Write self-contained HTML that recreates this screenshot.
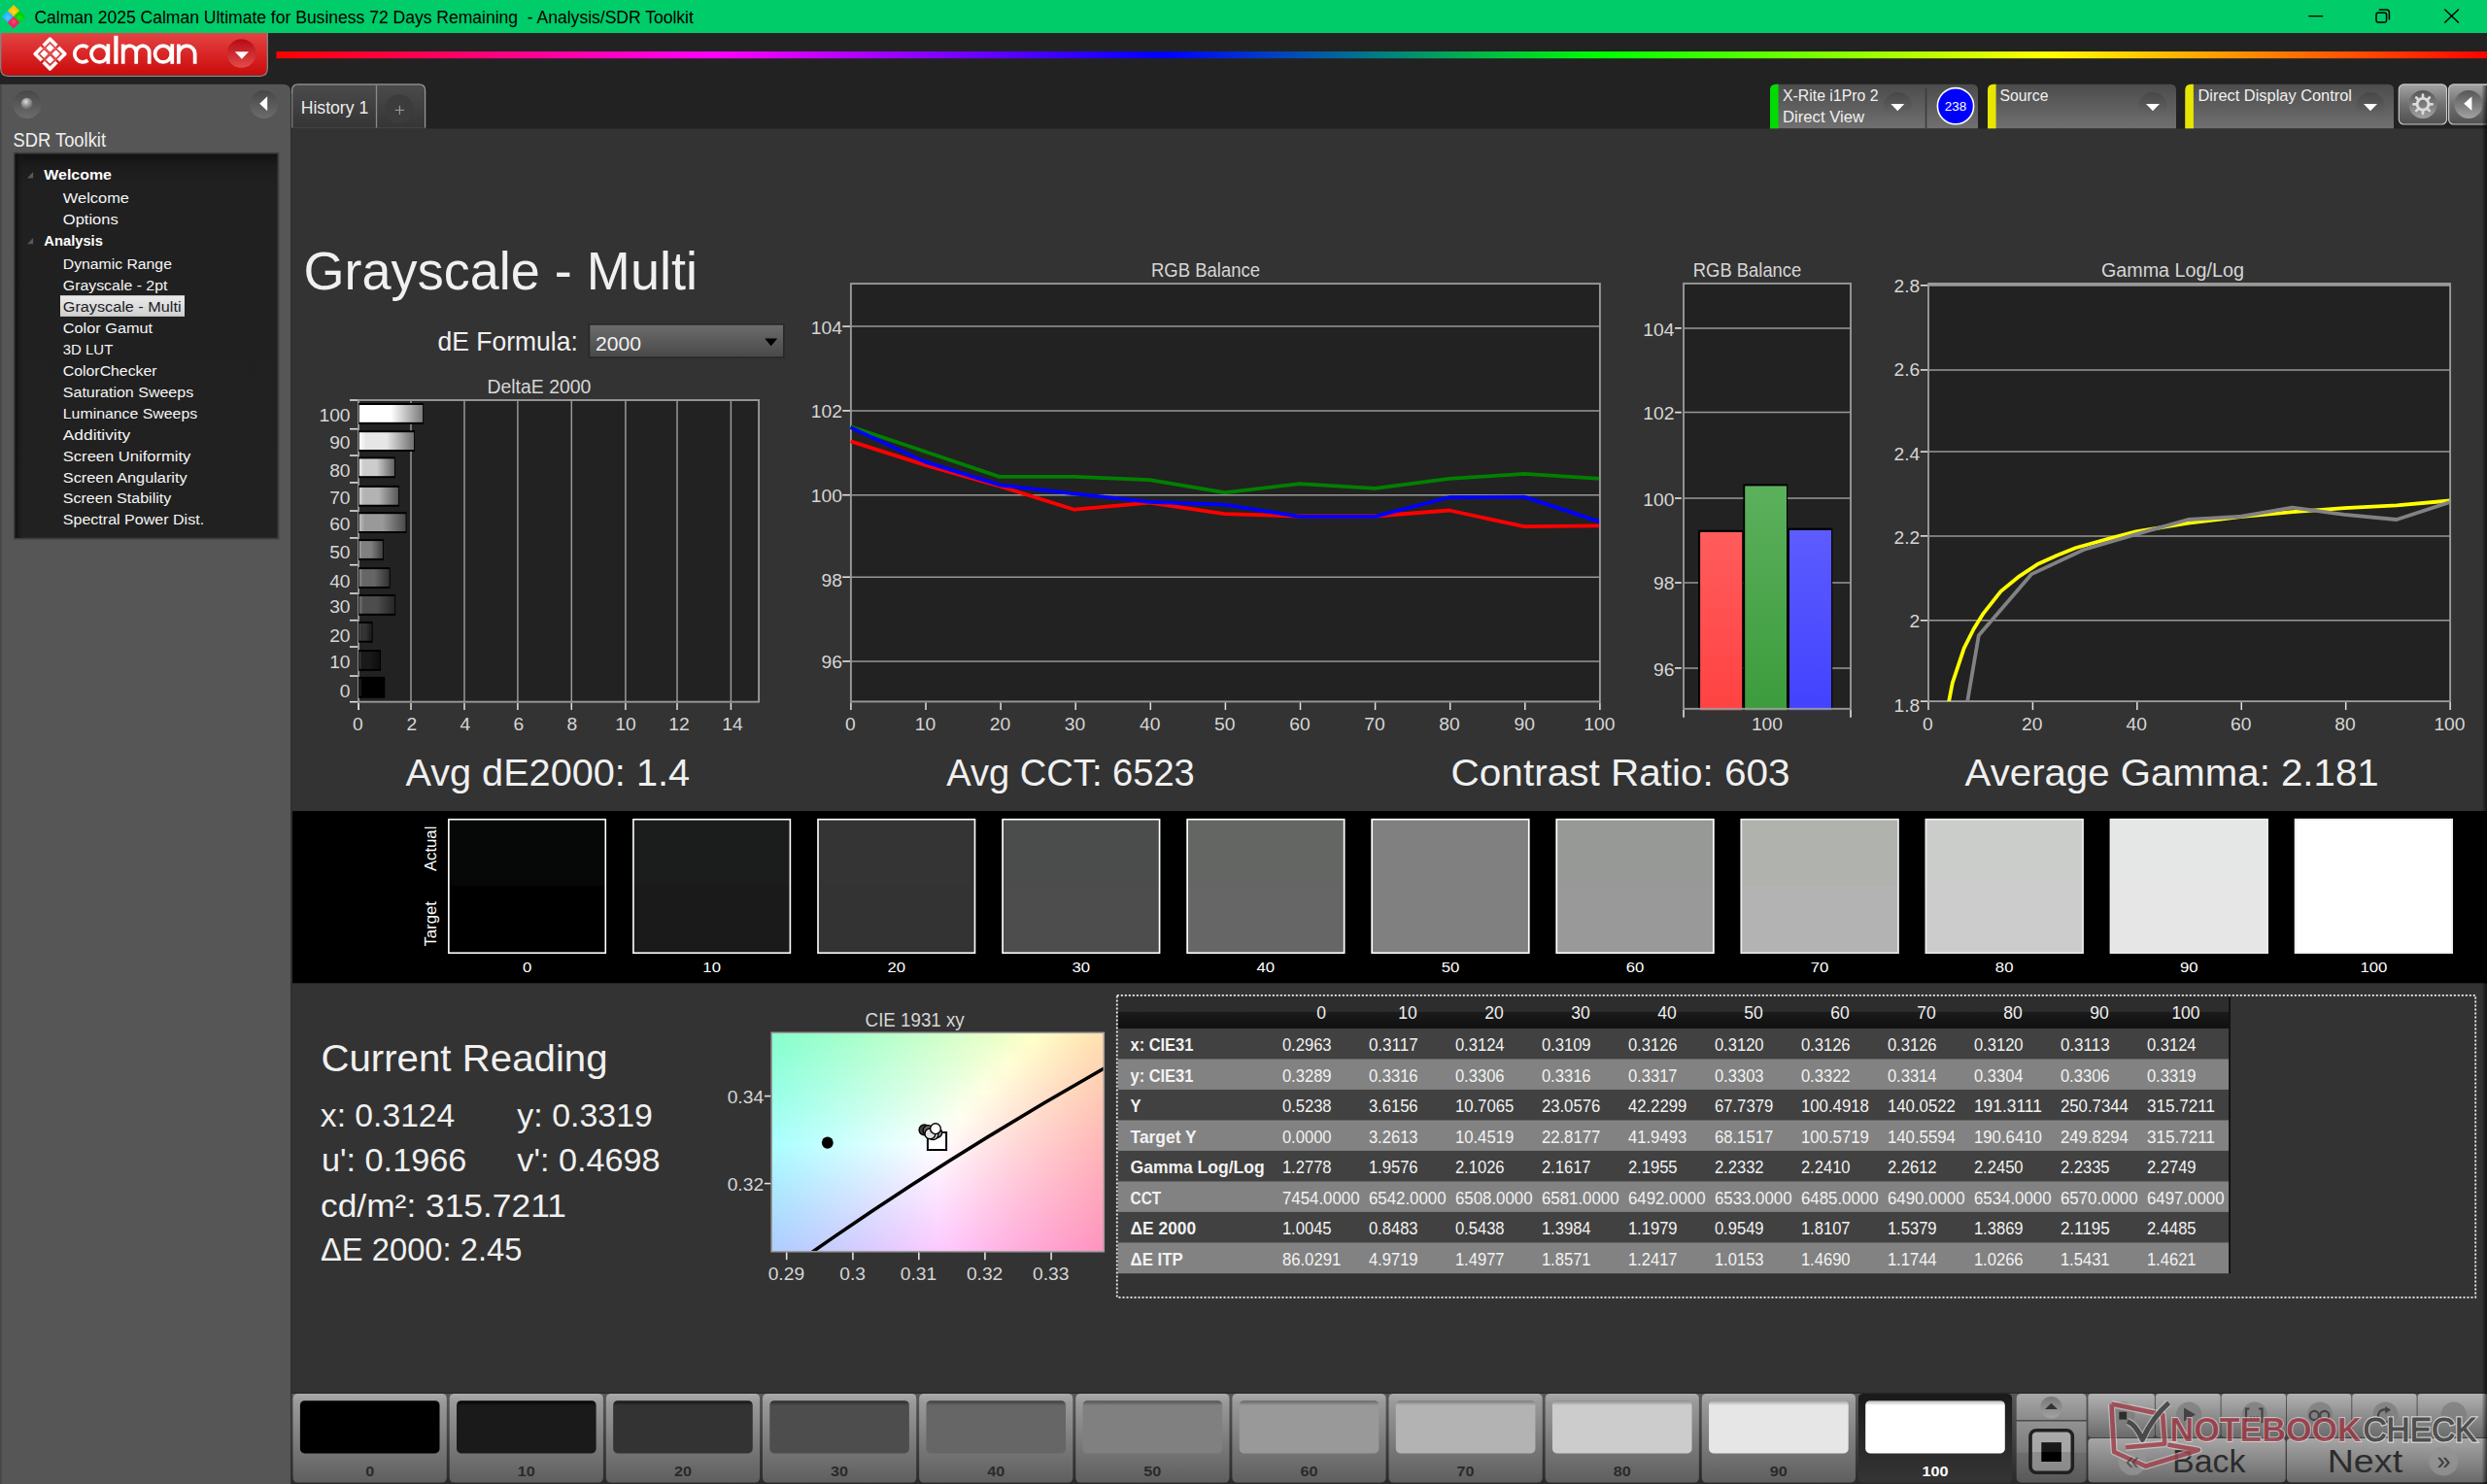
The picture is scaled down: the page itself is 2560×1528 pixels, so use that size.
<!DOCTYPE html>
<html><head><meta charset="utf-8"><title>Calman</title>
<style>
html,body{margin:0;padding:0;background:#333333;width:2560px;height:1528px;overflow:hidden}
svg{display:block;position:absolute;left:0;top:0;font-family:"Liberation Sans",sans-serif}
</style></head><body>
<svg width="2560" height="1528" viewBox="0 0 2560 1528">
<defs>
<linearGradient id="gLogo" x1="0" y1="0" x2="0" y2="1"><stop offset="0" stop-color="#e24444"/><stop offset="0.5" stop-color="#d92626"/><stop offset="1" stop-color="#c90b0b"/></linearGradient>
<linearGradient id="gDD" x1="0" y1="0" x2="0" y2="1"><stop offset="0" stop-color="#b50a14"/><stop offset="1" stop-color="#e24c4c"/></linearGradient>
<linearGradient id="gRain" x1="284" y1="0" x2="2563" y2="0" gradientUnits="userSpaceOnUse"><stop offset="0" stop-color="#ff0000"/><stop offset="0.2" stop-color="#ff00ff"/><stop offset="0.4" stop-color="#0000ff"/><stop offset="0.6" stop-color="#00ff00"/><stop offset="0.8" stop-color="#ffff00"/><stop offset="1" stop-color="#ff0000"/></linearGradient>
<linearGradient id="gSideR" x1="0" y1="0" x2="1" y2="0"><stop offset="0" stop-color="#686868" stop-opacity="0"/><stop offset="1" stop-color="#686868" stop-opacity="0.0"/></linearGradient>
<linearGradient id="gCirc" x1="0" y1="0" x2="0" y2="1"><stop offset="0" stop-color="#474747"/><stop offset="1" stop-color="#6c6c6c"/></linearGradient>
<radialGradient id="gBall2" cx="0.42" cy="0.35" r="0.62" ><stop offset="0" stop-color="#e0e0e0"/><stop offset="0.45" stop-color="#a0a0a0"/><stop offset="1" stop-color="#6a6a6a"/></radialGradient>
<linearGradient id="gTree" x1="0" y1="0" x2="0" y2="1"><stop offset="0" stop-color="#121212"/><stop offset="0.035" stop-color="#1c1c1c"/><stop offset="0.08" stop-color="#202020"/><stop offset="1" stop-color="#212121"/></linearGradient>
<linearGradient id="gTreeL" x1="0" y1="0" x2="1" y2="0"><stop offset="0" stop-color="#0c0c0c" stop-opacity="0.9"/><stop offset="1" stop-color="#202020" stop-opacity="0"/></linearGradient>
<linearGradient id="gSelI" x1="0" y1="0" x2="0" y2="1"><stop offset="0" stop-color="#ececec"/><stop offset="1" stop-color="#cfcfcf"/></linearGradient>
<linearGradient id="gTab" x1="0" y1="0" x2="0" y2="1"><stop offset="0" stop-color="#4b4b4b"/><stop offset="1" stop-color="#353535"/></linearGradient>
<linearGradient id="gTool" x1="0" y1="0" x2="0" y2="1"><stop offset="0" stop-color="#4c4c4c"/><stop offset="1" stop-color="#707070"/></linearGradient>
<linearGradient id="gBtn" x1="0" y1="0" x2="0" y2="1"><stop offset="0" stop-color="#a4a4a4"/><stop offset="0.5" stop-color="#707070"/><stop offset="1" stop-color="#505050"/></linearGradient>
<linearGradient id="gCirc2" x1="0" y1="0" x2="0" y2="1"><stop offset="0" stop-color="#565656"/><stop offset="1" stop-color="#a2a2a2"/></linearGradient>
<linearGradient id="gSel" x1="0" y1="0" x2="0" y2="1"><stop offset="0" stop-color="#6c6c6c"/><stop offset="1" stop-color="#484848"/></linearGradient>
<linearGradient id="gb0" x1="0" y1="0" x2="1" y2="0"><stop offset="0" stop-color="#262626"/><stop offset="0.12" stop-color="#000000"/><stop offset="0.5" stop-color="#000000"/><stop offset="1" stop-color="#000000"/></linearGradient>
<linearGradient id="gb1" x1="0" y1="0" x2="1" y2="0"><stop offset="0" stop-color="#404040"/><stop offset="0.12" stop-color="#1a1a1a"/><stop offset="0.5" stop-color="#1a1a1a"/><stop offset="1" stop-color="#0c0c0c"/></linearGradient>
<linearGradient id="gb2" x1="0" y1="0" x2="1" y2="0"><stop offset="0" stop-color="#595959"/><stop offset="0.12" stop-color="#333333"/><stop offset="0.5" stop-color="#333333"/><stop offset="1" stop-color="#181818"/></linearGradient>
<linearGradient id="gb3" x1="0" y1="0" x2="1" y2="0"><stop offset="0" stop-color="#737373"/><stop offset="0.12" stop-color="#4d4d4d"/><stop offset="0.5" stop-color="#4d4d4d"/><stop offset="1" stop-color="#252525"/></linearGradient>
<linearGradient id="gb4" x1="0" y1="0" x2="1" y2="0"><stop offset="0" stop-color="#8c8c8c"/><stop offset="0.12" stop-color="#666666"/><stop offset="0.5" stop-color="#666666"/><stop offset="1" stop-color="#313131"/></linearGradient>
<linearGradient id="gb5" x1="0" y1="0" x2="1" y2="0"><stop offset="0" stop-color="#a6a6a6"/><stop offset="0.12" stop-color="#808080"/><stop offset="0.5" stop-color="#808080"/><stop offset="1" stop-color="#3d3d3d"/></linearGradient>
<linearGradient id="gb6" x1="0" y1="0" x2="1" y2="0"><stop offset="0" stop-color="#bfbfbf"/><stop offset="0.12" stop-color="#999999"/><stop offset="0.5" stop-color="#999999"/><stop offset="1" stop-color="#494949"/></linearGradient>
<linearGradient id="gb7" x1="0" y1="0" x2="1" y2="0"><stop offset="0" stop-color="#d9d9d9"/><stop offset="0.12" stop-color="#b3b3b3"/><stop offset="0.5" stop-color="#b3b3b3"/><stop offset="1" stop-color="#565656"/></linearGradient>
<linearGradient id="gb8" x1="0" y1="0" x2="1" y2="0"><stop offset="0" stop-color="#f2f2f2"/><stop offset="0.12" stop-color="#cccccc"/><stop offset="0.5" stop-color="#cccccc"/><stop offset="1" stop-color="#626262"/></linearGradient>
<linearGradient id="gb9" x1="0" y1="0" x2="1" y2="0"><stop offset="0" stop-color="#ffffff"/><stop offset="0.12" stop-color="#e6e6e6"/><stop offset="0.5" stop-color="#e6e6e6"/><stop offset="1" stop-color="#6e6e6e"/></linearGradient>
<linearGradient id="gb10" x1="0" y1="0" x2="1" y2="0"><stop offset="0" stop-color="#ffffff"/><stop offset="0.12" stop-color="#ffffff"/><stop offset="0.5" stop-color="#ffffff"/><stop offset="1" stop-color="#7a7a7a"/></linearGradient>
<linearGradient id="gR" x1="0" y1="0" x2="0" y2="1"><stop offset="0" stop-color="#ff5c5c"/><stop offset="1" stop-color="#ff4242"/></linearGradient>
<linearGradient id="gG" x1="0" y1="0" x2="0" y2="1"><stop offset="0" stop-color="#5cb05c"/><stop offset="1" stop-color="#3c9c3c"/></linearGradient>
<linearGradient id="gB" x1="0" y1="0" x2="0" y2="1"><stop offset="0" stop-color="#5c5cff"/><stop offset="1" stop-color="#4242ff"/></linearGradient>
<linearGradient id="ci0" x1="0" y1="0" x2="1" y2="0"><stop offset="0.0000" stop-color="#86ffcd"/><stop offset="0.0714" stop-color="#8fffcd"/><stop offset="0.1429" stop-color="#99ffcd"/><stop offset="0.2143" stop-color="#a4ffcc"/><stop offset="0.2857" stop-color="#aeffcc"/><stop offset="0.3571" stop-color="#b9ffcb"/><stop offset="0.4286" stop-color="#c3ffcb"/><stop offset="0.5000" stop-color="#ceffca"/><stop offset="0.5714" stop-color="#daffca"/><stop offset="0.6429" stop-color="#e5ffc9"/><stop offset="0.7143" stop-color="#f1ffc9"/><stop offset="0.7857" stop-color="#fdffc8"/><stop offset="0.8571" stop-color="#fff5c0"/><stop offset="0.9286" stop-color="#ffeab7"/><stop offset="1.0000" stop-color="#ffe0af"/></linearGradient>
<linearGradient id="ci1" x1="0" y1="0" x2="1" y2="0"><stop offset="0.0000" stop-color="#87ffcf"/><stop offset="0.0714" stop-color="#91ffcf"/><stop offset="0.1429" stop-color="#9bffcf"/><stop offset="0.2143" stop-color="#a5ffce"/><stop offset="0.2857" stop-color="#b0ffce"/><stop offset="0.3571" stop-color="#baffcd"/><stop offset="0.4286" stop-color="#c5ffcd"/><stop offset="0.5000" stop-color="#d0ffcc"/><stop offset="0.5714" stop-color="#dcffcc"/><stop offset="0.6429" stop-color="#e7ffcb"/><stop offset="0.7143" stop-color="#f3ffcb"/><stop offset="0.7857" stop-color="#ffffca"/><stop offset="0.8571" stop-color="#fff3c1"/><stop offset="0.9286" stop-color="#ffe8b8"/><stop offset="1.0000" stop-color="#ffdeaf"/></linearGradient>
<linearGradient id="ci2" x1="0" y1="0" x2="1" y2="0"><stop offset="0.0000" stop-color="#88ffd1"/><stop offset="0.0714" stop-color="#92ffd1"/><stop offset="0.1429" stop-color="#9dffd1"/><stop offset="0.2143" stop-color="#a7ffd0"/><stop offset="0.2857" stop-color="#b1ffd0"/><stop offset="0.3571" stop-color="#bcffcf"/><stop offset="0.4286" stop-color="#c7ffcf"/><stop offset="0.5000" stop-color="#d2ffce"/><stop offset="0.5714" stop-color="#deffce"/><stop offset="0.6429" stop-color="#e9ffce"/><stop offset="0.7143" stop-color="#f5ffcd"/><stop offset="0.7857" stop-color="#fffdcb"/><stop offset="0.8571" stop-color="#fff1c1"/><stop offset="0.9286" stop-color="#ffe6b8"/><stop offset="1.0000" stop-color="#ffdcaf"/></linearGradient>
<linearGradient id="ci3" x1="0" y1="0" x2="1" y2="0"><stop offset="0.0000" stop-color="#8affd3"/><stop offset="0.0714" stop-color="#94ffd3"/><stop offset="0.1429" stop-color="#9effd3"/><stop offset="0.2143" stop-color="#a9ffd2"/><stop offset="0.2857" stop-color="#b3ffd2"/><stop offset="0.3571" stop-color="#beffd1"/><stop offset="0.4286" stop-color="#c9ffd1"/><stop offset="0.5000" stop-color="#d4ffd1"/><stop offset="0.5714" stop-color="#e0ffd0"/><stop offset="0.6429" stop-color="#ecffd0"/><stop offset="0.7143" stop-color="#f7ffcf"/><stop offset="0.7857" stop-color="#fffacb"/><stop offset="0.8571" stop-color="#ffefc1"/><stop offset="0.9286" stop-color="#ffe4b8"/><stop offset="1.0000" stop-color="#ffdab0"/></linearGradient>
<linearGradient id="ci4" x1="0" y1="0" x2="1" y2="0"><stop offset="0.0000" stop-color="#8bffd5"/><stop offset="0.0714" stop-color="#95ffd5"/><stop offset="0.1429" stop-color="#a0ffd5"/><stop offset="0.2143" stop-color="#aaffd4"/><stop offset="0.2857" stop-color="#b5ffd4"/><stop offset="0.3571" stop-color="#c0ffd4"/><stop offset="0.4286" stop-color="#cbffd3"/><stop offset="0.5000" stop-color="#d6ffd3"/><stop offset="0.5714" stop-color="#e2ffd2"/><stop offset="0.6429" stop-color="#eeffd2"/><stop offset="0.7143" stop-color="#faffd1"/><stop offset="0.7857" stop-color="#fff8cb"/><stop offset="0.8571" stop-color="#ffedc2"/><stop offset="0.9286" stop-color="#ffe2b9"/><stop offset="1.0000" stop-color="#ffd8b0"/></linearGradient>
<linearGradient id="ci5" x1="0" y1="0" x2="1" y2="0"><stop offset="0.0000" stop-color="#8dffd7"/><stop offset="0.0714" stop-color="#97ffd7"/><stop offset="0.1429" stop-color="#a1ffd7"/><stop offset="0.2143" stop-color="#acffd6"/><stop offset="0.2857" stop-color="#b7ffd6"/><stop offset="0.3571" stop-color="#c2ffd6"/><stop offset="0.4286" stop-color="#cdffd5"/><stop offset="0.5000" stop-color="#d8ffd5"/><stop offset="0.5714" stop-color="#e4ffd4"/><stop offset="0.6429" stop-color="#f0ffd4"/><stop offset="0.7143" stop-color="#fcffd4"/><stop offset="0.7857" stop-color="#fff6cc"/><stop offset="0.8571" stop-color="#ffebc2"/><stop offset="0.9286" stop-color="#ffe0b9"/><stop offset="1.0000" stop-color="#ffd7b1"/></linearGradient>
<linearGradient id="ci6" x1="0" y1="0" x2="1" y2="0"><stop offset="0.0000" stop-color="#8effd9"/><stop offset="0.0714" stop-color="#99ffd9"/><stop offset="0.1429" stop-color="#a3ffd9"/><stop offset="0.2143" stop-color="#aeffd8"/><stop offset="0.2857" stop-color="#b8ffd8"/><stop offset="0.3571" stop-color="#c4ffd8"/><stop offset="0.4286" stop-color="#cfffd7"/><stop offset="0.5000" stop-color="#daffd7"/><stop offset="0.5714" stop-color="#e6ffd7"/><stop offset="0.6429" stop-color="#f2ffd6"/><stop offset="0.7143" stop-color="#feffd6"/><stop offset="0.7857" stop-color="#fff4cc"/><stop offset="0.8571" stop-color="#ffe9c2"/><stop offset="0.9286" stop-color="#ffdeb9"/><stop offset="1.0000" stop-color="#ffd5b1"/></linearGradient>
<linearGradient id="ci7" x1="0" y1="0" x2="1" y2="0"><stop offset="0.0000" stop-color="#90ffdb"/><stop offset="0.0714" stop-color="#9affdb"/><stop offset="0.1429" stop-color="#a4ffdb"/><stop offset="0.2143" stop-color="#afffda"/><stop offset="0.2857" stop-color="#baffda"/><stop offset="0.3571" stop-color="#c5ffda"/><stop offset="0.4286" stop-color="#d1ffd9"/><stop offset="0.5000" stop-color="#dcffd9"/><stop offset="0.5714" stop-color="#e8ffd9"/><stop offset="0.6429" stop-color="#f4ffd8"/><stop offset="0.7143" stop-color="#fffed7"/><stop offset="0.7857" stop-color="#fff2cc"/><stop offset="0.8571" stop-color="#ffe7c3"/><stop offset="0.9286" stop-color="#ffddba"/><stop offset="1.0000" stop-color="#ffd3b1"/></linearGradient>
<linearGradient id="ci8" x1="0" y1="0" x2="1" y2="0"><stop offset="0.0000" stop-color="#91ffdd"/><stop offset="0.0714" stop-color="#9bffdd"/><stop offset="0.1429" stop-color="#a6ffdd"/><stop offset="0.2143" stop-color="#b1ffdc"/><stop offset="0.2857" stop-color="#bcffdc"/><stop offset="0.3571" stop-color="#c7ffdc"/><stop offset="0.4286" stop-color="#d2ffdb"/><stop offset="0.5000" stop-color="#deffdb"/><stop offset="0.5714" stop-color="#eaffdb"/><stop offset="0.6429" stop-color="#f6ffda"/><stop offset="0.7143" stop-color="#fffcd7"/><stop offset="0.7857" stop-color="#fff0cd"/><stop offset="0.8571" stop-color="#ffe5c3"/><stop offset="0.9286" stop-color="#ffdbba"/><stop offset="1.0000" stop-color="#ffd1b2"/></linearGradient>
<linearGradient id="ci9" x1="0" y1="0" x2="1" y2="0"><stop offset="0.0000" stop-color="#93ffdf"/><stop offset="0.0714" stop-color="#9dffdf"/><stop offset="0.1429" stop-color="#a8ffdf"/><stop offset="0.2143" stop-color="#b3ffdf"/><stop offset="0.2857" stop-color="#beffde"/><stop offset="0.3571" stop-color="#c9ffde"/><stop offset="0.4286" stop-color="#d4ffde"/><stop offset="0.5000" stop-color="#e0ffdd"/><stop offset="0.5714" stop-color="#ecffdd"/><stop offset="0.6429" stop-color="#f8ffdd"/><stop offset="0.7143" stop-color="#fff9d7"/><stop offset="0.7857" stop-color="#ffeecd"/><stop offset="0.8571" stop-color="#ffe3c3"/><stop offset="0.9286" stop-color="#ffd9ba"/><stop offset="1.0000" stop-color="#ffcfb2"/></linearGradient>
<linearGradient id="ci10" x1="0" y1="0" x2="1" y2="0"><stop offset="0.0000" stop-color="#94ffe2"/><stop offset="0.0714" stop-color="#9fffe1"/><stop offset="0.1429" stop-color="#a9ffe1"/><stop offset="0.2143" stop-color="#b4ffe1"/><stop offset="0.2857" stop-color="#bfffe0"/><stop offset="0.3571" stop-color="#cbffe0"/><stop offset="0.4286" stop-color="#d6ffe0"/><stop offset="0.5000" stop-color="#e2ffe0"/><stop offset="0.5714" stop-color="#eeffdf"/><stop offset="0.6429" stop-color="#fbffdf"/><stop offset="0.7143" stop-color="#fff7d8"/><stop offset="0.7857" stop-color="#ffeccd"/><stop offset="0.8571" stop-color="#ffe1c4"/><stop offset="0.9286" stop-color="#ffd7bb"/><stop offset="1.0000" stop-color="#ffceb2"/></linearGradient>
<linearGradient id="ci11" x1="0" y1="0" x2="1" y2="0"><stop offset="0.0000" stop-color="#96ffe4"/><stop offset="0.0714" stop-color="#a0ffe3"/><stop offset="0.1429" stop-color="#abffe3"/><stop offset="0.2143" stop-color="#b6ffe3"/><stop offset="0.2857" stop-color="#c1ffe3"/><stop offset="0.3571" stop-color="#cdffe2"/><stop offset="0.4286" stop-color="#d8ffe2"/><stop offset="0.5000" stop-color="#e4ffe2"/><stop offset="0.5714" stop-color="#f1ffe2"/><stop offset="0.6429" stop-color="#fdffe1"/><stop offset="0.7143" stop-color="#fff5d8"/><stop offset="0.7857" stop-color="#ffe9ce"/><stop offset="0.8571" stop-color="#ffdfc4"/><stop offset="0.9286" stop-color="#ffd5bb"/><stop offset="1.0000" stop-color="#ffccb3"/></linearGradient>
<linearGradient id="ci12" x1="0" y1="0" x2="1" y2="0"><stop offset="0.0000" stop-color="#97ffe6"/><stop offset="0.0714" stop-color="#a2ffe6"/><stop offset="0.1429" stop-color="#adffe5"/><stop offset="0.2143" stop-color="#b8ffe5"/><stop offset="0.2857" stop-color="#c3ffe5"/><stop offset="0.3571" stop-color="#cfffe5"/><stop offset="0.4286" stop-color="#dbffe4"/><stop offset="0.5000" stop-color="#e7ffe4"/><stop offset="0.5714" stop-color="#f3ffe4"/><stop offset="0.6429" stop-color="#ffffe3"/><stop offset="0.7143" stop-color="#fff3d8"/><stop offset="0.7857" stop-color="#ffe7ce"/><stop offset="0.8571" stop-color="#ffddc4"/><stop offset="0.9286" stop-color="#ffd3bb"/><stop offset="1.0000" stop-color="#ffcab3"/></linearGradient>
<linearGradient id="ci13" x1="0" y1="0" x2="1" y2="0"><stop offset="0.0000" stop-color="#99ffe8"/><stop offset="0.0714" stop-color="#a4ffe8"/><stop offset="0.1429" stop-color="#afffe8"/><stop offset="0.2143" stop-color="#baffe7"/><stop offset="0.2857" stop-color="#c5ffe7"/><stop offset="0.3571" stop-color="#d1ffe7"/><stop offset="0.4286" stop-color="#ddffe7"/><stop offset="0.5000" stop-color="#e9ffe7"/><stop offset="0.5714" stop-color="#f5ffe6"/><stop offset="0.6429" stop-color="#fffce4"/><stop offset="0.7143" stop-color="#fff0d9"/><stop offset="0.7857" stop-color="#ffe5ce"/><stop offset="0.8571" stop-color="#ffdbc5"/><stop offset="0.9286" stop-color="#ffd1bc"/><stop offset="1.0000" stop-color="#ffc8b3"/></linearGradient>
<linearGradient id="ci14" x1="0" y1="0" x2="1" y2="0"><stop offset="0.0000" stop-color="#9bffea"/><stop offset="0.0714" stop-color="#a5ffea"/><stop offset="0.1429" stop-color="#b0ffea"/><stop offset="0.2143" stop-color="#bcffea"/><stop offset="0.2857" stop-color="#c7ffea"/><stop offset="0.3571" stop-color="#d3ffe9"/><stop offset="0.4286" stop-color="#dfffe9"/><stop offset="0.5000" stop-color="#ebffe9"/><stop offset="0.5714" stop-color="#f7ffe9"/><stop offset="0.6429" stop-color="#fffae4"/><stop offset="0.7143" stop-color="#ffeed9"/><stop offset="0.7857" stop-color="#ffe3cf"/><stop offset="0.8571" stop-color="#ffd9c5"/><stop offset="0.9286" stop-color="#ffcfbc"/><stop offset="1.0000" stop-color="#ffc6b4"/></linearGradient>
<linearGradient id="ci15" x1="0" y1="0" x2="1" y2="0"><stop offset="0.0000" stop-color="#9cffed"/><stop offset="0.0714" stop-color="#a7ffec"/><stop offset="0.1429" stop-color="#b2ffec"/><stop offset="0.2143" stop-color="#beffec"/><stop offset="0.2857" stop-color="#c9ffec"/><stop offset="0.3571" stop-color="#d5ffec"/><stop offset="0.4286" stop-color="#e1ffec"/><stop offset="0.5000" stop-color="#edffeb"/><stop offset="0.5714" stop-color="#faffeb"/><stop offset="0.6429" stop-color="#fff8e4"/><stop offset="0.7143" stop-color="#ffecd9"/><stop offset="0.7857" stop-color="#ffe1cf"/><stop offset="0.8571" stop-color="#ffd7c5"/><stop offset="0.9286" stop-color="#ffcdbd"/><stop offset="1.0000" stop-color="#ffc4b4"/></linearGradient>
<linearGradient id="ci16" x1="0" y1="0" x2="1" y2="0"><stop offset="0.0000" stop-color="#9effef"/><stop offset="0.0714" stop-color="#a9ffef"/><stop offset="0.1429" stop-color="#b4ffef"/><stop offset="0.2143" stop-color="#bfffee"/><stop offset="0.2857" stop-color="#cbffee"/><stop offset="0.3571" stop-color="#d7ffee"/><stop offset="0.4286" stop-color="#e3ffee"/><stop offset="0.5000" stop-color="#efffee"/><stop offset="0.5714" stop-color="#fcffee"/><stop offset="0.6429" stop-color="#fff5e4"/><stop offset="0.7143" stop-color="#ffead9"/><stop offset="0.7857" stop-color="#ffdfcf"/><stop offset="0.8571" stop-color="#ffd5c6"/><stop offset="0.9286" stop-color="#ffcbbd"/><stop offset="1.0000" stop-color="#ffc3b5"/></linearGradient>
<linearGradient id="ci17" x1="0" y1="0" x2="1" y2="0"><stop offset="0.0000" stop-color="#a0fff1"/><stop offset="0.0714" stop-color="#abfff1"/><stop offset="0.1429" stop-color="#b6fff1"/><stop offset="0.2143" stop-color="#c1fff1"/><stop offset="0.2857" stop-color="#cdfff1"/><stop offset="0.3571" stop-color="#d9fff1"/><stop offset="0.4286" stop-color="#e5fff0"/><stop offset="0.5000" stop-color="#f2fff0"/><stop offset="0.5714" stop-color="#fffff0"/><stop offset="0.6429" stop-color="#fff3e5"/><stop offset="0.7143" stop-color="#ffe8da"/><stop offset="0.7857" stop-color="#ffddd0"/><stop offset="0.8571" stop-color="#ffd3c6"/><stop offset="0.9286" stop-color="#ffcabd"/><stop offset="1.0000" stop-color="#ffc1b5"/></linearGradient>
<linearGradient id="ci18" x1="0" y1="0" x2="1" y2="0"><stop offset="0.0000" stop-color="#a1fff3"/><stop offset="0.0714" stop-color="#acfff3"/><stop offset="0.1429" stop-color="#b8fff3"/><stop offset="0.2143" stop-color="#c3fff3"/><stop offset="0.2857" stop-color="#cffff3"/><stop offset="0.3571" stop-color="#dbfff3"/><stop offset="0.4286" stop-color="#e7fff3"/><stop offset="0.5000" stop-color="#f4fff3"/><stop offset="0.5714" stop-color="#fffdf1"/><stop offset="0.6429" stop-color="#fff1e5"/><stop offset="0.7143" stop-color="#ffe6da"/><stop offset="0.7857" stop-color="#ffdbd0"/><stop offset="0.8571" stop-color="#ffd1c6"/><stop offset="0.9286" stop-color="#ffc8be"/><stop offset="1.0000" stop-color="#ffbfb5"/></linearGradient>
<linearGradient id="ci19" x1="0" y1="0" x2="1" y2="0"><stop offset="0.0000" stop-color="#a3fff5"/><stop offset="0.0714" stop-color="#aefff5"/><stop offset="0.1429" stop-color="#b9fff5"/><stop offset="0.2143" stop-color="#c5fff5"/><stop offset="0.2857" stop-color="#d1fff5"/><stop offset="0.3571" stop-color="#ddfff5"/><stop offset="0.4286" stop-color="#e9fff5"/><stop offset="0.5000" stop-color="#f6fff5"/><stop offset="0.5714" stop-color="#fffbf1"/><stop offset="0.6429" stop-color="#ffefe5"/><stop offset="0.7143" stop-color="#ffe4da"/><stop offset="0.7857" stop-color="#ffd9d0"/><stop offset="0.8571" stop-color="#ffcfc7"/><stop offset="0.9286" stop-color="#ffc6be"/><stop offset="1.0000" stop-color="#ffbeb6"/></linearGradient>
<linearGradient id="ci20" x1="0" y1="0" x2="1" y2="0"><stop offset="0.0000" stop-color="#a4fff8"/><stop offset="0.0714" stop-color="#b0fff8"/><stop offset="0.1429" stop-color="#bbfff8"/><stop offset="0.2143" stop-color="#c7fff8"/><stop offset="0.2857" stop-color="#d3fff8"/><stop offset="0.3571" stop-color="#dffff7"/><stop offset="0.4286" stop-color="#ecfff7"/><stop offset="0.5000" stop-color="#f8fff7"/><stop offset="0.5714" stop-color="#fff9f1"/><stop offset="0.6429" stop-color="#ffede5"/><stop offset="0.7143" stop-color="#ffe1db"/><stop offset="0.7857" stop-color="#ffd7d0"/><stop offset="0.8571" stop-color="#ffcdc7"/><stop offset="0.9286" stop-color="#ffc4be"/><stop offset="1.0000" stop-color="#ffbcb6"/></linearGradient>
<linearGradient id="ci21" x1="0" y1="0" x2="1" y2="0"><stop offset="0.0000" stop-color="#a6fffa"/><stop offset="0.0714" stop-color="#b1fffa"/><stop offset="0.1429" stop-color="#bdfffa"/><stop offset="0.2143" stop-color="#c9fffa"/><stop offset="0.2857" stop-color="#d5fffa"/><stop offset="0.3571" stop-color="#e1fffa"/><stop offset="0.4286" stop-color="#eefffa"/><stop offset="0.5000" stop-color="#fbfffa"/><stop offset="0.5714" stop-color="#fff6f1"/><stop offset="0.6429" stop-color="#ffeae6"/><stop offset="0.7143" stop-color="#ffdfdb"/><stop offset="0.7857" stop-color="#ffd5d1"/><stop offset="0.8571" stop-color="#ffcbc7"/><stop offset="0.9286" stop-color="#ffc3bf"/><stop offset="1.0000" stop-color="#ffbab6"/></linearGradient>
<linearGradient id="ci22" x1="0" y1="0" x2="1" y2="0"><stop offset="0.0000" stop-color="#a8fffd"/><stop offset="0.0714" stop-color="#b3fffd"/><stop offset="0.1429" stop-color="#bffffd"/><stop offset="0.2143" stop-color="#cbfffd"/><stop offset="0.2857" stop-color="#d7fffd"/><stop offset="0.3571" stop-color="#e4fffd"/><stop offset="0.4286" stop-color="#f0fffd"/><stop offset="0.5000" stop-color="#fdfffd"/><stop offset="0.5714" stop-color="#fff4f2"/><stop offset="0.6429" stop-color="#ffe8e6"/><stop offset="0.7143" stop-color="#ffdddb"/><stop offset="0.7857" stop-color="#ffd3d1"/><stop offset="0.8571" stop-color="#ffcac8"/><stop offset="0.9286" stop-color="#ffc1bf"/><stop offset="1.0000" stop-color="#ffb8b7"/></linearGradient>
<linearGradient id="ci23" x1="0" y1="0" x2="1" y2="0"><stop offset="0.0000" stop-color="#aaffff"/><stop offset="0.0714" stop-color="#b5ffff"/><stop offset="0.1429" stop-color="#c1ffff"/><stop offset="0.2143" stop-color="#cdffff"/><stop offset="0.2857" stop-color="#d9ffff"/><stop offset="0.3571" stop-color="#e6ffff"/><stop offset="0.4286" stop-color="#f2ffff"/><stop offset="0.5000" stop-color="#fffeff"/><stop offset="0.5714" stop-color="#fff2f2"/><stop offset="0.6429" stop-color="#ffe6e6"/><stop offset="0.7143" stop-color="#ffdbdb"/><stop offset="0.7857" stop-color="#ffd1d1"/><stop offset="0.8571" stop-color="#ffc8c8"/><stop offset="0.9286" stop-color="#ffbfbf"/><stop offset="1.0000" stop-color="#ffb7b7"/></linearGradient>
<linearGradient id="ci24" x1="0" y1="0" x2="1" y2="0"><stop offset="0.0000" stop-color="#aafdff"/><stop offset="0.0714" stop-color="#b5fcff"/><stop offset="0.1429" stop-color="#c1fcff"/><stop offset="0.2143" stop-color="#cdfcff"/><stop offset="0.2857" stop-color="#d9fcff"/><stop offset="0.3571" stop-color="#e6fcff"/><stop offset="0.4286" stop-color="#f2fcff"/><stop offset="0.5000" stop-color="#fffcff"/><stop offset="0.5714" stop-color="#ffeff2"/><stop offset="0.6429" stop-color="#ffe4e7"/><stop offset="0.7143" stop-color="#ffd9dc"/><stop offset="0.7857" stop-color="#ffcfd2"/><stop offset="0.8571" stop-color="#ffc6c8"/><stop offset="0.9286" stop-color="#ffbdc0"/><stop offset="1.0000" stop-color="#ffb5b7"/></linearGradient>
<linearGradient id="ci25" x1="0" y1="0" x2="1" y2="0"><stop offset="0.0000" stop-color="#aafaff"/><stop offset="0.0714" stop-color="#b5faff"/><stop offset="0.1429" stop-color="#c1faff"/><stop offset="0.2143" stop-color="#cdfaff"/><stop offset="0.2857" stop-color="#d9faff"/><stop offset="0.3571" stop-color="#e5faff"/><stop offset="0.4286" stop-color="#f2faff"/><stop offset="0.5000" stop-color="#fff9ff"/><stop offset="0.5714" stop-color="#ffedf2"/><stop offset="0.6429" stop-color="#ffe2e7"/><stop offset="0.7143" stop-color="#ffd7dc"/><stop offset="0.7857" stop-color="#ffcdd2"/><stop offset="0.8571" stop-color="#ffc4c9"/><stop offset="0.9286" stop-color="#ffbbc0"/><stop offset="1.0000" stop-color="#ffb3b8"/></linearGradient>
<linearGradient id="ci26" x1="0" y1="0" x2="1" y2="0"><stop offset="0.0000" stop-color="#aaf8ff"/><stop offset="0.0714" stop-color="#b6f8ff"/><stop offset="0.1429" stop-color="#c1f7ff"/><stop offset="0.2143" stop-color="#cdf7ff"/><stop offset="0.2857" stop-color="#d9f7ff"/><stop offset="0.3571" stop-color="#e5f7ff"/><stop offset="0.4286" stop-color="#f2f7ff"/><stop offset="0.5000" stop-color="#fff7ff"/><stop offset="0.5714" stop-color="#ffebf3"/><stop offset="0.6429" stop-color="#ffdfe7"/><stop offset="0.7143" stop-color="#ffd5dc"/><stop offset="0.7857" stop-color="#ffcbd2"/><stop offset="0.8571" stop-color="#ffc2c9"/><stop offset="0.9286" stop-color="#ffbac0"/><stop offset="1.0000" stop-color="#ffb2b8"/></linearGradient>
<linearGradient id="ci27" x1="0" y1="0" x2="1" y2="0"><stop offset="0.0000" stop-color="#aaf5ff"/><stop offset="0.0714" stop-color="#b6f5ff"/><stop offset="0.1429" stop-color="#c1f5ff"/><stop offset="0.2143" stop-color="#cdf5ff"/><stop offset="0.2857" stop-color="#d9f5ff"/><stop offset="0.3571" stop-color="#e5f5ff"/><stop offset="0.4286" stop-color="#f2f5ff"/><stop offset="0.5000" stop-color="#fff5ff"/><stop offset="0.5714" stop-color="#ffe9f3"/><stop offset="0.6429" stop-color="#ffdee7"/><stop offset="0.7143" stop-color="#ffd3dd"/><stop offset="0.7857" stop-color="#ffc9d3"/><stop offset="0.8571" stop-color="#ffc0c9"/><stop offset="0.9286" stop-color="#ffb8c0"/><stop offset="1.0000" stop-color="#ffb0b8"/></linearGradient>
<linearGradient id="ci28" x1="0" y1="0" x2="1" y2="0"><stop offset="0.0000" stop-color="#aaf3ff"/><stop offset="0.0714" stop-color="#b6f3ff"/><stop offset="0.1429" stop-color="#c1f3ff"/><stop offset="0.2143" stop-color="#cdf3ff"/><stop offset="0.2857" stop-color="#d9f3ff"/><stop offset="0.3571" stop-color="#e5f3ff"/><stop offset="0.4286" stop-color="#f2f2ff"/><stop offset="0.5000" stop-color="#fff2ff"/><stop offset="0.5714" stop-color="#ffe7f3"/><stop offset="0.6429" stop-color="#ffdce7"/><stop offset="0.7143" stop-color="#ffd1dd"/><stop offset="0.7857" stop-color="#ffc8d3"/><stop offset="0.8571" stop-color="#ffbfc9"/><stop offset="0.9286" stop-color="#ffb6c1"/><stop offset="1.0000" stop-color="#ffaeb9"/></linearGradient>
<linearGradient id="ci29" x1="0" y1="0" x2="1" y2="0"><stop offset="0.0000" stop-color="#abf1ff"/><stop offset="0.0714" stop-color="#b6f1ff"/><stop offset="0.1429" stop-color="#c1f1ff"/><stop offset="0.2143" stop-color="#cdf0ff"/><stop offset="0.2857" stop-color="#d9f0ff"/><stop offset="0.3571" stop-color="#e5f0ff"/><stop offset="0.4286" stop-color="#f2f0ff"/><stop offset="0.5000" stop-color="#fef0ff"/><stop offset="0.5714" stop-color="#ffe4f3"/><stop offset="0.6429" stop-color="#ffd9e8"/><stop offset="0.7143" stop-color="#ffcfdd"/><stop offset="0.7857" stop-color="#ffc6d3"/><stop offset="0.8571" stop-color="#ffbdca"/><stop offset="0.9286" stop-color="#ffb5c1"/><stop offset="1.0000" stop-color="#ffadb9"/></linearGradient>
<linearGradient id="ci30" x1="0" y1="0" x2="1" y2="0"><stop offset="0.0000" stop-color="#abefff"/><stop offset="0.0714" stop-color="#b6eeff"/><stop offset="0.1429" stop-color="#c1eeff"/><stop offset="0.2143" stop-color="#cdeeff"/><stop offset="0.2857" stop-color="#d9eeff"/><stop offset="0.3571" stop-color="#e5eeff"/><stop offset="0.4286" stop-color="#f1edff"/><stop offset="0.5000" stop-color="#feedff"/><stop offset="0.5714" stop-color="#ffe2f3"/><stop offset="0.6429" stop-color="#ffd7e8"/><stop offset="0.7143" stop-color="#ffcddd"/><stop offset="0.7857" stop-color="#ffc4d3"/><stop offset="0.8571" stop-color="#ffbbca"/><stop offset="0.9286" stop-color="#ffb3c1"/><stop offset="1.0000" stop-color="#ffabb9"/></linearGradient>
<linearGradient id="ci31" x1="0" y1="0" x2="1" y2="0"><stop offset="0.0000" stop-color="#abecff"/><stop offset="0.0714" stop-color="#b6ecff"/><stop offset="0.1429" stop-color="#c1ecff"/><stop offset="0.2143" stop-color="#cdecff"/><stop offset="0.2857" stop-color="#d9ebff"/><stop offset="0.3571" stop-color="#e5ebff"/><stop offset="0.4286" stop-color="#f1ebff"/><stop offset="0.5000" stop-color="#feebff"/><stop offset="0.5714" stop-color="#ffe0f4"/><stop offset="0.6429" stop-color="#ffd5e8"/><stop offset="0.7143" stop-color="#ffcbde"/><stop offset="0.7857" stop-color="#ffc2d4"/><stop offset="0.8571" stop-color="#ffb9ca"/><stop offset="0.9286" stop-color="#ffb1c2"/><stop offset="1.0000" stop-color="#ffa9ba"/></linearGradient>
<linearGradient id="ci32" x1="0" y1="0" x2="1" y2="0"><stop offset="0.0000" stop-color="#abeaff"/><stop offset="0.0714" stop-color="#b6eaff"/><stop offset="0.1429" stop-color="#c2e9ff"/><stop offset="0.2143" stop-color="#cde9ff"/><stop offset="0.2857" stop-color="#d9e9ff"/><stop offset="0.3571" stop-color="#e5e9ff"/><stop offset="0.4286" stop-color="#f1e8ff"/><stop offset="0.5000" stop-color="#fee8ff"/><stop offset="0.5714" stop-color="#ffdef4"/><stop offset="0.6429" stop-color="#ffd3e8"/><stop offset="0.7143" stop-color="#ffc9de"/><stop offset="0.7857" stop-color="#ffc0d4"/><stop offset="0.8571" stop-color="#ffb7cb"/><stop offset="0.9286" stop-color="#ffafc2"/><stop offset="1.0000" stop-color="#ffa8ba"/></linearGradient>
<linearGradient id="ci33" x1="0" y1="0" x2="1" y2="0"><stop offset="0.0000" stop-color="#abe8ff"/><stop offset="0.0714" stop-color="#b6e7ff"/><stop offset="0.1429" stop-color="#c2e7ff"/><stop offset="0.2143" stop-color="#cde7ff"/><stop offset="0.2857" stop-color="#d9e7ff"/><stop offset="0.3571" stop-color="#e5e6ff"/><stop offset="0.4286" stop-color="#f1e6ff"/><stop offset="0.5000" stop-color="#fee6ff"/><stop offset="0.5714" stop-color="#ffdcf4"/><stop offset="0.6429" stop-color="#ffd1e9"/><stop offset="0.7143" stop-color="#ffc7de"/><stop offset="0.7857" stop-color="#ffbed4"/><stop offset="0.8571" stop-color="#ffb6cb"/><stop offset="0.9286" stop-color="#ffaec2"/><stop offset="1.0000" stop-color="#ffa6ba"/></linearGradient>
<linearGradient id="ci34" x1="0" y1="0" x2="1" y2="0"><stop offset="0.0000" stop-color="#abe5ff"/><stop offset="0.0714" stop-color="#b6e5ff"/><stop offset="0.1429" stop-color="#c2e5ff"/><stop offset="0.2143" stop-color="#cde4ff"/><stop offset="0.2857" stop-color="#d9e4ff"/><stop offset="0.3571" stop-color="#e5e4ff"/><stop offset="0.4286" stop-color="#f1e4ff"/><stop offset="0.5000" stop-color="#fde3ff"/><stop offset="0.5714" stop-color="#ffd9f4"/><stop offset="0.6429" stop-color="#ffcfe9"/><stop offset="0.7143" stop-color="#ffc5de"/><stop offset="0.7857" stop-color="#ffbcd5"/><stop offset="0.8571" stop-color="#ffb4cb"/><stop offset="0.9286" stop-color="#ffacc3"/><stop offset="1.0000" stop-color="#ffa5bb"/></linearGradient>
<linearGradient id="ci35" x1="0" y1="0" x2="1" y2="0"><stop offset="0.0000" stop-color="#abe3ff"/><stop offset="0.0714" stop-color="#b6e3ff"/><stop offset="0.1429" stop-color="#c2e2ff"/><stop offset="0.2143" stop-color="#cde2ff"/><stop offset="0.2857" stop-color="#d9e2ff"/><stop offset="0.3571" stop-color="#e5e2ff"/><stop offset="0.4286" stop-color="#f1e1ff"/><stop offset="0.5000" stop-color="#fde1ff"/><stop offset="0.5714" stop-color="#ffd7f5"/><stop offset="0.6429" stop-color="#ffcde9"/><stop offset="0.7143" stop-color="#ffc3df"/><stop offset="0.7857" stop-color="#ffbad5"/><stop offset="0.8571" stop-color="#ffb2cc"/><stop offset="0.9286" stop-color="#ffaac3"/><stop offset="1.0000" stop-color="#ffa3bb"/></linearGradient>
<linearGradient id="ci36" x1="0" y1="0" x2="1" y2="0"><stop offset="0.0000" stop-color="#ace1ff"/><stop offset="0.0714" stop-color="#b7e0ff"/><stop offset="0.1429" stop-color="#c2e0ff"/><stop offset="0.2143" stop-color="#cde0ff"/><stop offset="0.2857" stop-color="#d9dfff"/><stop offset="0.3571" stop-color="#e5dfff"/><stop offset="0.4286" stop-color="#f1dfff"/><stop offset="0.5000" stop-color="#fddeff"/><stop offset="0.5714" stop-color="#ffd5f5"/><stop offset="0.6429" stop-color="#ffcbe9"/><stop offset="0.7143" stop-color="#ffc1df"/><stop offset="0.7857" stop-color="#ffb9d5"/><stop offset="0.8571" stop-color="#ffb0cc"/><stop offset="0.9286" stop-color="#ffa9c3"/><stop offset="1.0000" stop-color="#ffa1bb"/></linearGradient>
<linearGradient id="ci37" x1="0" y1="0" x2="1" y2="0"><stop offset="0.0000" stop-color="#acdfff"/><stop offset="0.0714" stop-color="#b7deff"/><stop offset="0.1429" stop-color="#c2deff"/><stop offset="0.2143" stop-color="#cddeff"/><stop offset="0.2857" stop-color="#d9ddff"/><stop offset="0.3571" stop-color="#e5ddff"/><stop offset="0.4286" stop-color="#f1dcff"/><stop offset="0.5000" stop-color="#fddcff"/><stop offset="0.5714" stop-color="#ffd3f5"/><stop offset="0.6429" stop-color="#ffc9ea"/><stop offset="0.7143" stop-color="#ffc0df"/><stop offset="0.7857" stop-color="#ffb7d5"/><stop offset="0.8571" stop-color="#ffafcc"/><stop offset="0.9286" stop-color="#ffa7c4"/><stop offset="1.0000" stop-color="#ffa0bc"/></linearGradient>
<linearGradient id="ci38" x1="0" y1="0" x2="1" y2="0"><stop offset="0.0000" stop-color="#acddff"/><stop offset="0.0714" stop-color="#b7dcff"/><stop offset="0.1429" stop-color="#c2dcff"/><stop offset="0.2143" stop-color="#cddbff"/><stop offset="0.2857" stop-color="#d9dbff"/><stop offset="0.3571" stop-color="#e4dbff"/><stop offset="0.4286" stop-color="#f1daff"/><stop offset="0.5000" stop-color="#fddaff"/><stop offset="0.5714" stop-color="#ffd1f5"/><stop offset="0.6429" stop-color="#ffc7ea"/><stop offset="0.7143" stop-color="#ffbedf"/><stop offset="0.7857" stop-color="#ffb5d6"/><stop offset="0.8571" stop-color="#ffadcc"/><stop offset="0.9286" stop-color="#ffa5c4"/><stop offset="1.0000" stop-color="#ff9ebc"/></linearGradient>
<linearGradient id="ci39" x1="0" y1="0" x2="1" y2="0"><stop offset="0.0000" stop-color="#acdbff"/><stop offset="0.0714" stop-color="#b7daff"/><stop offset="0.1429" stop-color="#c2daff"/><stop offset="0.2143" stop-color="#cdd9ff"/><stop offset="0.2857" stop-color="#d9d9ff"/><stop offset="0.3571" stop-color="#e4d9ff"/><stop offset="0.4286" stop-color="#f0d8ff"/><stop offset="0.5000" stop-color="#fdd8ff"/><stop offset="0.5714" stop-color="#ffcff5"/><stop offset="0.6429" stop-color="#ffc5ea"/><stop offset="0.7143" stop-color="#ffbce0"/><stop offset="0.7857" stop-color="#ffb3d6"/><stop offset="0.8571" stop-color="#ffabcd"/><stop offset="0.9286" stop-color="#ffa4c4"/><stop offset="1.0000" stop-color="#ff9dbc"/></linearGradient>
<linearGradient id="ci40" x1="0" y1="0" x2="1" y2="0"><stop offset="0.0000" stop-color="#acd8ff"/><stop offset="0.0714" stop-color="#b7d8ff"/><stop offset="0.1429" stop-color="#c2d8ff"/><stop offset="0.2143" stop-color="#cdd7ff"/><stop offset="0.2857" stop-color="#d9d7ff"/><stop offset="0.3571" stop-color="#e4d6ff"/><stop offset="0.4286" stop-color="#f0d6ff"/><stop offset="0.5000" stop-color="#fcd5ff"/><stop offset="0.5714" stop-color="#ffcdf6"/><stop offset="0.6429" stop-color="#ffc3ea"/><stop offset="0.7143" stop-color="#ffbae0"/><stop offset="0.7857" stop-color="#ffb2d6"/><stop offset="0.8571" stop-color="#ffaacd"/><stop offset="0.9286" stop-color="#ffa2c4"/><stop offset="1.0000" stop-color="#ff9bbc"/></linearGradient>
<linearGradient id="ci41" x1="0" y1="0" x2="1" y2="0"><stop offset="0.0000" stop-color="#acd6ff"/><stop offset="0.0714" stop-color="#b7d6ff"/><stop offset="0.1429" stop-color="#c2d5ff"/><stop offset="0.2143" stop-color="#cdd5ff"/><stop offset="0.2857" stop-color="#d9d5ff"/><stop offset="0.3571" stop-color="#e4d4ff"/><stop offset="0.4286" stop-color="#f0d4ff"/><stop offset="0.5000" stop-color="#fcd3ff"/><stop offset="0.5714" stop-color="#ffcbf6"/><stop offset="0.6429" stop-color="#ffc1eb"/><stop offset="0.7143" stop-color="#ffb8e0"/><stop offset="0.7857" stop-color="#ffb0d6"/><stop offset="0.8571" stop-color="#ffa8cd"/><stop offset="0.9286" stop-color="#ffa1c5"/><stop offset="1.0000" stop-color="#ff9abd"/></linearGradient>
<linearGradient id="ci42" x1="0" y1="0" x2="1" y2="0"><stop offset="0.0000" stop-color="#acd4ff"/><stop offset="0.0714" stop-color="#b7d4ff"/><stop offset="0.1429" stop-color="#c2d3ff"/><stop offset="0.2143" stop-color="#cdd3ff"/><stop offset="0.2857" stop-color="#d9d2ff"/><stop offset="0.3571" stop-color="#e4d2ff"/><stop offset="0.4286" stop-color="#f0d1ff"/><stop offset="0.5000" stop-color="#fcd1ff"/><stop offset="0.5714" stop-color="#ffc9f6"/><stop offset="0.6429" stop-color="#ffbfeb"/><stop offset="0.7143" stop-color="#ffb6e0"/><stop offset="0.7857" stop-color="#ffaed7"/><stop offset="0.8571" stop-color="#ffa6ce"/><stop offset="0.9286" stop-color="#ff9fc5"/><stop offset="1.0000" stop-color="#ff98bd"/></linearGradient>
<linearGradient id="ci43" x1="0" y1="0" x2="1" y2="0"><stop offset="0.0000" stop-color="#add2ff"/><stop offset="0.0714" stop-color="#b7d1ff"/><stop offset="0.1429" stop-color="#c2d1ff"/><stop offset="0.2143" stop-color="#cdd1ff"/><stop offset="0.2857" stop-color="#d9d0ff"/><stop offset="0.3571" stop-color="#e4d0ff"/><stop offset="0.4286" stop-color="#f0cfff"/><stop offset="0.5000" stop-color="#fccfff"/><stop offset="0.5714" stop-color="#ffc7f6"/><stop offset="0.6429" stop-color="#ffbdeb"/><stop offset="0.7143" stop-color="#ffb5e1"/><stop offset="0.7857" stop-color="#ffacd7"/><stop offset="0.8571" stop-color="#ffa5ce"/><stop offset="0.9286" stop-color="#ff9dc5"/><stop offset="1.0000" stop-color="#ff97bd"/></linearGradient>
<linearGradient id="ci44" x1="0" y1="0" x2="1" y2="0"><stop offset="0.0000" stop-color="#add0ff"/><stop offset="0.0714" stop-color="#b7cfff"/><stop offset="0.1429" stop-color="#c2cfff"/><stop offset="0.2143" stop-color="#cdceff"/><stop offset="0.2857" stop-color="#d9ceff"/><stop offset="0.3571" stop-color="#e4cdff"/><stop offset="0.4286" stop-color="#f0cdff"/><stop offset="0.5000" stop-color="#fcccff"/><stop offset="0.5714" stop-color="#ffc5f6"/><stop offset="0.6429" stop-color="#ffbbeb"/><stop offset="0.7143" stop-color="#ffb3e1"/><stop offset="0.7857" stop-color="#ffabd7"/><stop offset="0.8571" stop-color="#ffa3ce"/><stop offset="0.9286" stop-color="#ff9cc6"/><stop offset="1.0000" stop-color="#ff95be"/></linearGradient>
<linearGradient id="ci45" x1="0" y1="0" x2="1" y2="0"><stop offset="0.0000" stop-color="#adceff"/><stop offset="0.0714" stop-color="#b7cdff"/><stop offset="0.1429" stop-color="#c2cdff"/><stop offset="0.2143" stop-color="#cdccff"/><stop offset="0.2857" stop-color="#d9ccff"/><stop offset="0.3571" stop-color="#e4cbff"/><stop offset="0.4286" stop-color="#f0cbff"/><stop offset="0.5000" stop-color="#fccaff"/><stop offset="0.5714" stop-color="#ffc3f7"/><stop offset="0.6429" stop-color="#ffbaeb"/><stop offset="0.7143" stop-color="#ffb1e1"/><stop offset="0.7857" stop-color="#ffa9d7"/><stop offset="0.8571" stop-color="#ffa1ce"/><stop offset="0.9286" stop-color="#ff9ac6"/><stop offset="1.0000" stop-color="#ff93be"/></linearGradient>
<linearGradient id="gHdr" x1="0" y1="0" x2="0" y2="1"><stop offset="0" stop-color="#1b1b1b"/><stop offset="1" stop-color="#0f0f0f"/></linearGradient>
<linearGradient id="gBarBg" x1="0" y1="0" x2="0" y2="1"><stop offset="0" stop-color="#2a2a2a"/><stop offset="0.012" stop-color="#2a2a2a"/><stop offset="0.02" stop-color="#585858"/><stop offset="1" stop-color="#2a2a2a"/></linearGradient>
<linearGradient id="gBB" x1="0" y1="0" x2="0" y2="1"><stop offset="0" stop-color="#ababab"/><stop offset="0.1" stop-color="#999999"/><stop offset="1" stop-color="#5e5e5e"/></linearGradient>
<linearGradient id="gBBs" x1="0" y1="0" x2="0" y2="1"><stop offset="0" stop-color="#1a1a1a"/><stop offset="0.1" stop-color="#1c1c1c"/><stop offset="1" stop-color="#353535"/></linearGradient>
<linearGradient id="sw0" x1="0" y1="0" x2="0" y2="1"><stop offset="0" stop-color="#000000"/><stop offset="0.09" stop-color="#000000"/><stop offset="1" stop-color="#000000"/></linearGradient>
<linearGradient id="sw1" x1="0" y1="0" x2="0" y2="1"><stop offset="0" stop-color="#000000"/><stop offset="0.09" stop-color="#1a1a1a"/><stop offset="1" stop-color="#1a1a1a"/></linearGradient>
<linearGradient id="sw2" x1="0" y1="0" x2="0" y2="1"><stop offset="0" stop-color="#131313"/><stop offset="0.09" stop-color="#333333"/><stop offset="1" stop-color="#333333"/></linearGradient>
<linearGradient id="sw3" x1="0" y1="0" x2="0" y2="1"><stop offset="0" stop-color="#282828"/><stop offset="0.09" stop-color="#4d4d4d"/><stop offset="1" stop-color="#4d4d4d"/></linearGradient>
<linearGradient id="sw4" x1="0" y1="0" x2="0" y2="1"><stop offset="0" stop-color="#3c3c3c"/><stop offset="0.09" stop-color="#666666"/><stop offset="1" stop-color="#666666"/></linearGradient>
<linearGradient id="sw5" x1="0" y1="0" x2="0" y2="1"><stop offset="0" stop-color="#505050"/><stop offset="0.09" stop-color="#808080"/><stop offset="1" stop-color="#808080"/></linearGradient>
<linearGradient id="sw6" x1="0" y1="0" x2="0" y2="1"><stop offset="0" stop-color="#646464"/><stop offset="0.09" stop-color="#999999"/><stop offset="1" stop-color="#999999"/></linearGradient>
<linearGradient id="sw7" x1="0" y1="0" x2="0" y2="1"><stop offset="0" stop-color="#797979"/><stop offset="0.09" stop-color="#b3b3b3"/><stop offset="1" stop-color="#b3b3b3"/></linearGradient>
<linearGradient id="sw8" x1="0" y1="0" x2="0" y2="1"><stop offset="0" stop-color="#8d8d8d"/><stop offset="0.09" stop-color="#cccccc"/><stop offset="1" stop-color="#cccccc"/></linearGradient>
<linearGradient id="sw9" x1="0" y1="0" x2="0" y2="1"><stop offset="0" stop-color="#a2a2a2"/><stop offset="0.09" stop-color="#e6e6e6"/><stop offset="1" stop-color="#e6e6e6"/></linearGradient>
<linearGradient id="sw10" x1="0" y1="0" x2="0" y2="1"><stop offset="0" stop-color="#b6b6b6"/><stop offset="0.09" stop-color="#ffffff"/><stop offset="1" stop-color="#ffffff"/></linearGradient>
<linearGradient id="gBB2" x1="0" y1="0" x2="0" y2="1"><stop offset="0" stop-color="#a8a8a8"/><stop offset="1" stop-color="#8a8a8a"/></linearGradient>
<linearGradient id="gUpC" x1="0" y1="0" x2="0" y2="1"><stop offset="0" stop-color="#787878"/><stop offset="1" stop-color="#a2a2a2"/></linearGradient>
<linearGradient id="gBB3" x1="0" y1="0" x2="0" y2="1"><stop offset="0" stop-color="#929292"/><stop offset="0.5" stop-color="#7a7a7a"/><stop offset="0.52" stop-color="#6e6e6e"/><stop offset="1" stop-color="#585858"/></linearGradient>
<linearGradient id="gStop" x1="0" y1="0" x2="0" y2="1"><stop offset="0" stop-color="#aaaaaa"/><stop offset="0.5" stop-color="#a6a6a6"/><stop offset="0.51" stop-color="#8e8e8e"/><stop offset="1" stop-color="#8a8a8a"/></linearGradient>
<linearGradient id="gStopB" x1="0" y1="0" x2="0" y2="1"><stop offset="0" stop-color="#1a1a1a"/><stop offset="0.5" stop-color="#161616"/><stop offset="0.51" stop-color="#000"/><stop offset="1" stop-color="#000"/></linearGradient>
<linearGradient id="gBB4" x1="0" y1="0" x2="0" y2="1"><stop offset="0" stop-color="#b2b2b2"/><stop offset="1" stop-color="#6a6a6a"/></linearGradient>
<linearGradient id="gBB5" x1="0" y1="0" x2="0" y2="1"><stop offset="0" stop-color="#a6a6a6"/><stop offset="1" stop-color="#6a6a6a"/></linearGradient>
<linearGradient id="gEdge" x1="0" y1="0" x2="1" y2="0"><stop offset="0" stop-color="#000" stop-opacity="0"/><stop offset="1" stop-color="#000" stop-opacity="0.62"/></linearGradient>
</defs>
<rect x="0.00" y="0.00" width="2560.00" height="1528.00" fill="#333333" />
<rect x="0.00" y="34.00" width="2560.00" height="98.40" fill="#222222" />
<rect x="0.00" y="0.00" width="2560.00" height="34.00" fill="#00cc6a" />
<path d="M14,4.8999999999999995 L20.3,11.2 L14,17.5 L7.7,11.2 Z" fill="#ffc400"/>
<path d="M14,9.0 L17.0,12.0 L14,15.0 L11.0,12.0 Z" fill="#ffdd44" opacity="0.55"/>
<path d="M8,10.899999999999999 L14.3,17.2 L8,23.5 L1.7000000000000002,17.2 Z" fill="#2db7ff"/>
<path d="M8,15.0 L11.0,18.0 L8,21.0 L5.0,18.0 Z" fill="#66ccff" opacity="0.55"/>
<path d="M20,10.899999999999999 L26.3,17.2 L20,23.5 L13.7,17.2 Z" fill="#00d400"/>
<path d="M20,15.0 L23.0,18.0 L20,21.0 L17.0,18.0 Z" fill="#33e033" opacity="0.55"/>
<path d="M14,16.9 L20.3,23.2 L14,29.5 L7.7,23.2 Z" fill="#f0245e"/>
<path d="M14,19.4 L17.0,22.4 L14,25.4 L11.0,22.4 Z" fill="#ff5580" opacity="0.55"/>
<text x="35.40" y="23.80" font-size="18.3" fill="#000000" textLength="678.50" lengthAdjust="spacingAndGlyphs" >Calman 2025 Calman Ultimate for Business 72 Days Remaining  - Analysis/SDR Toolkit</text>
<line x1="2376.30" y1="16.60" x2="2391.20" y2="16.60" stroke="#000" stroke-width="1.3" />
<rect x="2446" y="13.1" width="10.6" height="10" rx="2.3" fill="none" stroke="#000" stroke-width="1.5"/>
<path d="M2449.3,10 H2456.6 Q2459.4,10 2459.4,12.8 V19.8" fill="none" stroke="#000" stroke-width="1.5" stroke-linecap="round"/>
<line x1="2516.30" y1="9.60" x2="2530.90" y2="23.50" stroke="#000" stroke-width="1.4" />
<line x1="2530.90" y1="9.60" x2="2516.30" y2="23.50" stroke="#000" stroke-width="1.4" />
<path d="M1,34 H275 V70.5 Q275,77.6 268,77.6 H8 Q1,77.6 1,70.5 Z" fill="url(#gLogo)"/>
<path d="M0.7,34 V70.5 Q0.7,78.3 8.5,78.3 H267.5 Q275.3,78.3 275.3,70.5 V34" fill="none" stroke="#8c8c8c" stroke-width="1.2"/>
<path d="M51.5,43.1 L63.9,55.5 L51.5,67.9 L39.1,55.5 Z M45.3,49.3 L57.7,61.7 M57.7,49.3 L45.3,61.7" fill="none" stroke="#fff" stroke-opacity="0.22" stroke-width="1.6"/>
<path d="M51.5,40.1 L66.9,55.5 L51.5,70.9 L36.1,55.5 Z" fill="none" stroke="#fff" stroke-width="3.5" stroke-linejoin="round" stroke-dasharray="19.38 2.4" stroke-dashoffset="9.69"/>
<path d="M51.5,45.75 L55.2,49.45 L51.5,53.150000000000006 L47.8,49.45 Z" fill="#fff" stroke="#fff" stroke-width="1" stroke-linejoin="round"/>
<path d="M45.45,51.8 L49.150000000000006,55.5 L45.45,59.2 L41.75,55.5 Z" fill="#fff" stroke="#fff" stroke-width="1" stroke-linejoin="round"/>
<path d="M57.55,51.8 L61.25,55.5 L57.55,59.2 L53.849999999999994,55.5 Z" fill="#fff" stroke="#fff" stroke-width="1" stroke-linejoin="round"/>
<path d="M51.5,57.849999999999994 L55.2,61.55 L51.5,65.25 L47.8,61.55 Z" fill="#fff" stroke="#fff" stroke-width="1" stroke-linejoin="round"/>
<g fill="none" stroke="#fff" stroke-width="3.75"><path d="M90.49,49.02 A8.4,8.4 0 1 0 90.49,62.08"/><circle cx="102.4" cy="55.55" r="8.4"/><path d="M111.35,45.3 V65.8"/><path d="M119.4,36.8 V65.8" stroke-width="4.2"/><path d="M126.7,65.8 V45.6 M126.7,53.95 A6.75,6.75 0 0 1 140.2,53.95 V65.8 M140.2,53.95 A6.75,6.75 0 0 1 153.7,53.95 V65.8"/><circle cx="167.9" cy="55.55" r="8.4"/><path d="M177.25,45.3 V65.8"/><path d="M183.85,65.8 V45.6 M183.85,55.6 A8.4,8.4 0 0 1 200.65,55.6 V65.8"/></g>
<circle cx="248.6" cy="55" r="14.8" fill="url(#gDD)"/>
<path d="M241.8,53.3 H256 L248.9,60.7 Z" fill="#fff"/>
<rect x="284.50" y="53.00" width="2275.50" height="7.10" fill="url(#gRain)" />
<path d="M0,86.8 H291 Q299.3,86.8 299.3,95 V1528 H0 Z" fill="#565656"/>
<rect x="0.00" y="87.00" width="1.60" height="1441.00" fill="#474747" />
<circle cx="28" cy="107.5" r="14.6" fill="url(#gCirc)"/>
<circle cx="27.6" cy="106.6" r="5.9" fill="url(#gBall2)"/>
<circle cx="271.5" cy="107.5" r="14.6" fill="url(#gCirc)"/>
<path d="M275.2,99.3 V114.2 L267.2,106.7 Z" fill="#fff"/>
<text x="13.50" y="150.80" font-size="19.3" fill="#f0f0f0" textLength="95.50" lengthAdjust="spacingAndGlyphs" >SDR Toolkit</text>
<rect x="13.90" y="156.80" width="273.40" height="398.70" fill="#3e3e3e" />
<rect x="15.60" y="158.50" width="270.00" height="395.30" fill="url(#gTree)" />
<rect x="15.60" y="158.50" width="9.00" height="395.30" fill="url(#gTreeL)" />
<text x="45.30" y="184.70" font-size="15.4" fill="#ffffff" font-weight="bold" textLength="69.60" lengthAdjust="spacingAndGlyphs" >Welcome</text>
<path d="M28,183.39999999999998 H34.1 V177.1 Z" fill="#585858"/>
<text x="64.80" y="208.70" font-size="15.4" fill="#f6f6f6" textLength="68.20" lengthAdjust="spacingAndGlyphs" >Welcome</text>
<text x="64.80" y="230.90" font-size="15.4" fill="#f6f6f6" textLength="56.90" lengthAdjust="spacingAndGlyphs" >Options</text>
<text x="45.30" y="252.60" font-size="15.4" fill="#ffffff" font-weight="bold" textLength="60.60" lengthAdjust="spacingAndGlyphs" >Analysis</text>
<path d="M28,251.29999999999998 H34.1 V245.0 Z" fill="#585858"/>
<text x="64.80" y="276.70" font-size="15.4" fill="#f6f6f6" textLength="112.10" lengthAdjust="spacingAndGlyphs" >Dynamic Range</text>
<text x="64.80" y="298.60" font-size="15.4" fill="#f6f6f6" textLength="107.60" lengthAdjust="spacingAndGlyphs" >Grayscale - 2pt</text>
<rect x="62.00" y="304.20" width="128.00" height="21.70" fill="url(#gSelI)" />
<text x="64.80" y="320.50" font-size="15.4" fill="#1c1c26" textLength="121.70" lengthAdjust="spacingAndGlyphs" >Grayscale - Multi</text>
<text x="64.80" y="342.50" font-size="15.4" fill="#f6f6f6" textLength="92.30" lengthAdjust="spacingAndGlyphs" >Color Gamut</text>
<text x="64.80" y="364.60" font-size="15.4" fill="#f6f6f6" textLength="51.50" lengthAdjust="spacingAndGlyphs" >3D LUT</text>
<text x="64.80" y="386.80" font-size="15.4" fill="#f6f6f6" textLength="96.80" lengthAdjust="spacingAndGlyphs" >ColorChecker</text>
<text x="64.80" y="408.70" font-size="15.4" fill="#f6f6f6" textLength="134.40" lengthAdjust="spacingAndGlyphs" >Saturation Sweeps</text>
<text x="64.80" y="430.90" font-size="15.4" fill="#f6f6f6" textLength="138.40" lengthAdjust="spacingAndGlyphs" >Luminance Sweeps</text>
<text x="64.80" y="452.60" font-size="15.4" fill="#f6f6f6" textLength="69.40" lengthAdjust="spacingAndGlyphs" >Additivity</text>
<text x="64.80" y="474.50" font-size="15.4" fill="#f6f6f6" textLength="131.60" lengthAdjust="spacingAndGlyphs" >Screen Uniformity</text>
<text x="64.80" y="496.50" font-size="15.4" fill="#f6f6f6" textLength="127.90" lengthAdjust="spacingAndGlyphs" >Screen Angularity</text>
<text x="64.80" y="518.40" font-size="15.4" fill="#f6f6f6" textLength="111.50" lengthAdjust="spacingAndGlyphs" >Screen Stability</text>
<text x="64.80" y="539.60" font-size="15.4" fill="#f6f6f6" textLength="145.30" lengthAdjust="spacingAndGlyphs" >Spectral Power Dist.</text>
<path d="M300.6,132.3 V93 Q300.6,86.9 306.7,86.9 H431.5 Q437.6,86.9 437.6,93 V132.3 Z" fill="url(#gTab)" stroke="#9a9a9a" stroke-width="1.2"/>
<line x1="387.50" y1="88.00" x2="387.50" y2="132.00" stroke="#8a8a8a" stroke-width="1.3" />
<rect x="299.40" y="131.60" width="140.00" height="2.60" fill="#333333" />
<rect x="299.30" y="96.00" width="1.00" height="1432.00" fill="#2b2b2b" />
<text x="309.70" y="117.00" font-size="18.8" fill="#ececec" textLength="69.60" lengthAdjust="spacingAndGlyphs" >History 1</text>
<circle cx="411" cy="112.2" r="14.9" fill="#3c3c3c"/>
<line x1="406.70" y1="113.40" x2="416.10" y2="113.40" stroke="#9a9a9a" stroke-width="1.1" />
<line x1="411.40" y1="108.70" x2="411.40" y2="118.10" stroke="#9a9a9a" stroke-width="1.1" />
<path d="M1822,132.3 V93 Q1822,86.8 1828,86.8 H2030 Q2036,86.8 2036,93 V132.3 Z" fill="url(#gTool)"/>
<path d="M1822,132.3 V93 Q1822,86.8 1828,86.8 H1830.6 V132.3 Z" fill="#00dc00"/>
<path d="M2046,132.3 V93 Q2046,86.8 2052,86.8 H2234 Q2240,86.8 2240,93 V132.3 Z" fill="url(#gTool)"/>
<path d="M2046,132.3 V93 Q2046,86.8 2052,86.8 H2054.6 V132.3 Z" fill="#e6e600"/>
<path d="M2249.3,132.3 V93 Q2249.3,86.8 2255.3,86.8 H2458 Q2464,86.8 2464,93 V132.3 Z" fill="url(#gTool)"/>
<path d="M2249.3,132.3 V93 Q2249.3,86.8 2255.3,86.8 H2257.9 V132.3 Z" fill="#e6e600"/>
<circle cx="1953.3" cy="109.7" r="14.7" fill="url(#gCirc)"/>
<path d="M1946.3,107.10000000000001 H1960.3 L1953.3,114.3 Z" fill="#fff"/>
<circle cx="2216" cy="109.7" r="14.7" fill="url(#gCirc)"/>
<path d="M2209,107.10000000000001 H2223 L2216,114.3 Z" fill="#fff"/>
<circle cx="2440" cy="109.7" r="14.7" fill="url(#gCirc)"/>
<path d="M2433,107.10000000000001 H2447 L2440,114.3 Z" fill="#fff"/>
<line x1="1982.50" y1="91.00" x2="1982.50" y2="132.00" stroke="#3a3a3a" stroke-width="1.5" />
<circle cx="2013" cy="109.2" r="18.6" fill="#0000ff" stroke="#fff" stroke-width="1.6"/>
<text x="2013.00" y="114.00" font-size="13.6" fill="#fff" text-anchor="middle" textLength="22.50" lengthAdjust="spacingAndGlyphs" >238</text>
<text x="1835.00" y="104.30" font-size="16.3" fill="#f0f0f0" textLength="98.50" lengthAdjust="spacingAndGlyphs" >X-Rite i1Pro 2</text>
<text x="1835.00" y="126.20" font-size="16.3" fill="#f0f0f0" textLength="84.00" lengthAdjust="spacingAndGlyphs" >Direct View</text>
<text x="2058.50" y="104.30" font-size="16.3" fill="#f0f0f0" textLength="50.00" lengthAdjust="spacingAndGlyphs" >Source</text>
<text x="2262.50" y="104.30" font-size="16.3" fill="#f0f0f0" textLength="158.50" lengthAdjust="spacingAndGlyphs" >Direct Display Control</text>
<rect x="2469.30" y="86.90" width="49.20" height="41.10" fill="url(#gBtn)" rx="5" stroke="#c8c8c8" stroke-width="1.2" />
<rect x="2520.60" y="86.90" width="49.20" height="41.10" fill="url(#gBtn)" rx="5" stroke="#c8c8c8" stroke-width="1.2" />
<circle cx="2494" cy="107.5" r="14.5" fill="url(#gCirc2)"/>
<circle cx="2541" cy="107.5" r="14.5" fill="url(#gCirc2)"/>
<path d="M2544.4,99.5 V114 L2536.2,106.7 Z" fill="#fff"/>
<line x1="2500.50" y1="107.30" x2="2503.60" y2="107.30" stroke="#dcdcdc" stroke-width="2.7" stroke-linecap="round"/><line x1="2498.60" y1="111.90" x2="2500.79" y2="114.09" stroke="#dcdcdc" stroke-width="2.7" stroke-linecap="round"/><line x1="2494.00" y1="113.80" x2="2494.00" y2="116.90" stroke="#dcdcdc" stroke-width="2.7" stroke-linecap="round"/><line x1="2489.40" y1="111.90" x2="2487.21" y2="114.09" stroke="#dcdcdc" stroke-width="2.7" stroke-linecap="round"/><line x1="2487.50" y1="107.30" x2="2484.40" y2="107.30" stroke="#dcdcdc" stroke-width="2.7" stroke-linecap="round"/><line x1="2489.40" y1="102.70" x2="2487.21" y2="100.51" stroke="#dcdcdc" stroke-width="2.7" stroke-linecap="round"/><line x1="2494.00" y1="100.80" x2="2494.00" y2="97.70" stroke="#dcdcdc" stroke-width="2.7" stroke-linecap="round"/><line x1="2498.60" y1="102.70" x2="2500.79" y2="100.51" stroke="#dcdcdc" stroke-width="2.7" stroke-linecap="round"/>
<circle cx="2494" cy="107.3" r="5.9" fill="none" stroke="#dcdcdc" stroke-width="2.9"/>
<text x="312.50" y="298.00" font-size="55.5" fill="#f0f0f0" textLength="405.50" lengthAdjust="spacingAndGlyphs" >Grayscale - Multi</text>
<text x="450.50" y="360.70" font-size="27.3" fill="#f0f0f0" textLength="144.30" lengthAdjust="spacingAndGlyphs" >dE Formula:</text>
<rect x="606.50" y="334.00" width="200.30" height="34.00" fill="url(#gSel)" stroke="#272727" stroke-width="1.5" />
<text x="613.00" y="361.30" font-size="20" fill="#f0f0f0" textLength="47.00" lengthAdjust="spacingAndGlyphs" >2000</text>
<path d="M787.2,348.6 H800.2 L793.7,356.2 Z" fill="#000"/>
<text x="501.40" y="404.60" font-size="19.4" fill="#d6d6d6" textLength="107.00" lengthAdjust="spacingAndGlyphs" >DeltaE 2000</text>
<rect x="369.10" y="412.00" width="412.00" height="310.65" fill="#222222" />
<line x1="423.00" y1="412.00" x2="423.00" y2="722.65" stroke="#999999" stroke-width="1.5" />
<line x1="423.00" y1="723.65" x2="423.00" y2="730.90" stroke="#e2e2e2" stroke-width="1.5" />
<text x="423.90" y="751.50" font-size="18.6" fill="#d6d6d6" text-anchor="middle" textLength="10.72" lengthAdjust="spacingAndGlyphs" >2</text>
<line x1="478.00" y1="412.00" x2="478.00" y2="722.65" stroke="#999999" stroke-width="1.5" />
<line x1="478.00" y1="723.65" x2="478.00" y2="730.90" stroke="#e2e2e2" stroke-width="1.5" />
<text x="478.90" y="751.50" font-size="18.6" fill="#d6d6d6" text-anchor="middle" textLength="10.72" lengthAdjust="spacingAndGlyphs" >4</text>
<line x1="532.90" y1="412.00" x2="532.90" y2="722.65" stroke="#999999" stroke-width="1.5" />
<line x1="532.90" y1="723.65" x2="532.90" y2="730.90" stroke="#e2e2e2" stroke-width="1.5" />
<text x="533.90" y="751.50" font-size="18.6" fill="#d6d6d6" text-anchor="middle" textLength="10.72" lengthAdjust="spacingAndGlyphs" >6</text>
<line x1="588.30" y1="412.00" x2="588.30" y2="722.65" stroke="#999999" stroke-width="1.5" />
<line x1="588.30" y1="723.65" x2="588.30" y2="730.90" stroke="#e2e2e2" stroke-width="1.5" />
<text x="588.90" y="751.50" font-size="18.6" fill="#d6d6d6" text-anchor="middle" textLength="10.72" lengthAdjust="spacingAndGlyphs" >8</text>
<line x1="643.90" y1="412.00" x2="643.90" y2="722.65" stroke="#999999" stroke-width="1.5" />
<line x1="643.90" y1="723.65" x2="643.90" y2="730.90" stroke="#e2e2e2" stroke-width="1.5" />
<text x="643.90" y="751.50" font-size="18.6" fill="#d6d6d6" text-anchor="middle" textLength="21.44" lengthAdjust="spacingAndGlyphs" >10</text>
<line x1="697.00" y1="412.00" x2="697.00" y2="722.65" stroke="#999999" stroke-width="1.5" />
<line x1="697.00" y1="723.65" x2="697.00" y2="730.90" stroke="#e2e2e2" stroke-width="1.5" />
<text x="698.90" y="751.50" font-size="18.6" fill="#d6d6d6" text-anchor="middle" textLength="21.44" lengthAdjust="spacingAndGlyphs" >12</text>
<line x1="752.40" y1="412.00" x2="752.40" y2="722.65" stroke="#999999" stroke-width="1.5" />
<line x1="752.40" y1="723.65" x2="752.40" y2="730.90" stroke="#e2e2e2" stroke-width="1.5" />
<text x="753.90" y="751.50" font-size="18.6" fill="#d6d6d6" text-anchor="middle" textLength="21.44" lengthAdjust="spacingAndGlyphs" >14</text>
<line x1="369.10" y1="723.65" x2="369.10" y2="730.90" stroke="#e2e2e2" stroke-width="1.8" />
<text x="368.40" y="751.50" font-size="18.6" fill="#d6d6d6" text-anchor="middle" textLength="10.72" lengthAdjust="spacingAndGlyphs" >0</text>
<rect x="369.10" y="412.00" width="412.00" height="310.65" fill="none" stroke="#999999" stroke-width="1.9" />
<text x="360.60" y="717.95" font-size="18.6" fill="#d6d6d6" text-anchor="end" textLength="10.72" lengthAdjust="spacingAndGlyphs" >0</text>
<rect x="369.10" y="696.90" width="27.22" height="21.80" fill="#000" />
<rect x="369.80" y="698.90" width="25.62" height="17.80" fill="url(#gb0)" />
<text x="360.60" y="688.15" font-size="18.6" fill="#d6d6d6" text-anchor="end" textLength="21.44" lengthAdjust="spacingAndGlyphs" >10</text>
<rect x="369.10" y="669.00" width="22.93" height="21.80" fill="#000" />
<rect x="369.80" y="671.00" width="21.33" height="17.80" fill="url(#gb1)" />
<text x="360.60" y="660.85" font-size="18.6" fill="#d6d6d6" text-anchor="end" textLength="21.44" lengthAdjust="spacingAndGlyphs" >20</text>
<rect x="369.10" y="639.90" width="14.55" height="21.80" fill="#000" />
<rect x="369.80" y="641.90" width="12.95" height="17.80" fill="url(#gb2)" />
<text x="360.60" y="631.45" font-size="18.6" fill="#d6d6d6" text-anchor="end" textLength="21.44" lengthAdjust="spacingAndGlyphs" >30</text>
<rect x="369.10" y="612.00" width="38.06" height="21.80" fill="#000" />
<rect x="369.80" y="614.00" width="36.46" height="17.80" fill="url(#gb3)" />
<text x="360.60" y="604.75" font-size="18.6" fill="#d6d6d6" text-anchor="end" textLength="21.44" lengthAdjust="spacingAndGlyphs" >40</text>
<rect x="369.10" y="584.10" width="32.54" height="21.80" fill="#000" />
<rect x="369.80" y="586.10" width="30.94" height="17.80" fill="url(#gb4)" />
<text x="360.60" y="575.05" font-size="18.6" fill="#d6d6d6" text-anchor="end" textLength="21.44" lengthAdjust="spacingAndGlyphs" >50</text>
<rect x="369.10" y="555.10" width="25.86" height="21.80" fill="#000" />
<rect x="369.80" y="557.10" width="24.26" height="17.80" fill="url(#gb5)" />
<text x="360.60" y="546.25" font-size="18.6" fill="#d6d6d6" text-anchor="end" textLength="21.44" lengthAdjust="spacingAndGlyphs" >60</text>
<rect x="369.10" y="527.20" width="49.39" height="21.80" fill="#000" />
<rect x="369.80" y="529.20" width="47.79" height="17.80" fill="url(#gb6)" />
<text x="360.60" y="518.95" font-size="18.6" fill="#d6d6d6" text-anchor="end" textLength="21.44" lengthAdjust="spacingAndGlyphs" >70</text>
<rect x="369.10" y="499.90" width="41.89" height="21.80" fill="#000" />
<rect x="369.80" y="501.90" width="40.29" height="17.80" fill="url(#gb7)" />
<text x="360.60" y="490.55" font-size="18.6" fill="#d6d6d6" text-anchor="end" textLength="21.44" lengthAdjust="spacingAndGlyphs" >80</text>
<rect x="369.10" y="470.40" width="37.74" height="21.80" fill="#000" />
<rect x="369.80" y="472.40" width="36.14" height="17.80" fill="url(#gb8)" />
<text x="360.60" y="461.95" font-size="18.6" fill="#d6d6d6" text-anchor="end" textLength="21.44" lengthAdjust="spacingAndGlyphs" >90</text>
<rect x="369.10" y="443.20" width="57.89" height="21.80" fill="#000" />
<rect x="369.80" y="445.20" width="56.29" height="17.80" fill="url(#gb9)" />
<text x="360.60" y="433.75" font-size="18.6" fill="#d6d6d6" text-anchor="end" textLength="32.16" lengthAdjust="spacingAndGlyphs" >100</text>
<rect x="369.10" y="415.00" width="66.93" height="21.80" fill="#000" />
<rect x="369.80" y="417.00" width="65.33" height="17.80" fill="url(#gb10)" />
<line x1="360.00" y1="722.70" x2="368.30" y2="722.70" stroke="#e2e2e2" stroke-width="1.6" />
<line x1="360.00" y1="696.00" x2="368.30" y2="696.00" stroke="#e2e2e2" stroke-width="1.6" />
<line x1="360.00" y1="666.00" x2="368.30" y2="666.00" stroke="#e2e2e2" stroke-width="1.6" />
<line x1="360.00" y1="638.70" x2="368.30" y2="638.70" stroke="#e2e2e2" stroke-width="1.6" />
<line x1="360.00" y1="611.00" x2="368.30" y2="611.00" stroke="#e2e2e2" stroke-width="1.6" />
<line x1="360.00" y1="581.70" x2="368.30" y2="581.70" stroke="#e2e2e2" stroke-width="1.6" />
<line x1="360.00" y1="553.90" x2="368.30" y2="553.90" stroke="#e2e2e2" stroke-width="1.6" />
<line x1="360.00" y1="526.00" x2="368.30" y2="526.00" stroke="#e2e2e2" stroke-width="1.6" />
<line x1="360.00" y1="496.90" x2="368.30" y2="496.90" stroke="#e2e2e2" stroke-width="1.6" />
<line x1="360.00" y1="469.00" x2="368.30" y2="469.00" stroke="#e2e2e2" stroke-width="1.6" />
<line x1="360.00" y1="441.70" x2="368.30" y2="441.70" stroke="#e2e2e2" stroke-width="1.6" />
<line x1="360.00" y1="412.00" x2="368.30" y2="412.00" stroke="#e2e2e2" stroke-width="1.6" />
<text x="1185.00" y="285.40" font-size="19.4" fill="#d6d6d6" textLength="112.00" lengthAdjust="spacingAndGlyphs" >RGB Balance</text>
<rect x="875.90" y="292.10" width="771.00" height="430.30" fill="#222222" />
<line x1="875.90" y1="680.90" x2="1646.90" y2="680.90" stroke="#999999" stroke-width="1.5" />
<line x1="867.20" y1="680.90" x2="875.10" y2="680.90" stroke="#e2e2e2" stroke-width="1.6" />
<text x="866.90" y="687.75" font-size="18.6" fill="#d6d6d6" text-anchor="end" textLength="21.44" lengthAdjust="spacingAndGlyphs" >96</text>
<line x1="875.90" y1="594.20" x2="1646.90" y2="594.20" stroke="#999999" stroke-width="1.5" />
<line x1="867.20" y1="594.20" x2="875.10" y2="594.20" stroke="#e2e2e2" stroke-width="1.6" />
<text x="866.90" y="603.80" font-size="18.6" fill="#d6d6d6" text-anchor="end" textLength="21.44" lengthAdjust="spacingAndGlyphs" >98</text>
<line x1="875.90" y1="509.70" x2="1646.90" y2="509.70" stroke="#999999" stroke-width="1.5" />
<line x1="867.20" y1="509.70" x2="875.10" y2="509.70" stroke="#e2e2e2" stroke-width="1.6" />
<text x="866.90" y="516.50" font-size="18.6" fill="#d6d6d6" text-anchor="end" textLength="32.16" lengthAdjust="spacingAndGlyphs" >100</text>
<line x1="875.90" y1="422.90" x2="1646.90" y2="422.90" stroke="#999999" stroke-width="1.5" />
<line x1="867.20" y1="422.90" x2="875.10" y2="422.90" stroke="#e2e2e2" stroke-width="1.6" />
<text x="866.90" y="430.05" font-size="18.6" fill="#d6d6d6" text-anchor="end" textLength="32.16" lengthAdjust="spacingAndGlyphs" >102</text>
<line x1="875.90" y1="336.10" x2="1646.90" y2="336.10" stroke="#999999" stroke-width="1.5" />
<line x1="867.20" y1="336.10" x2="875.10" y2="336.10" stroke="#e2e2e2" stroke-width="1.6" />
<text x="866.90" y="343.85" font-size="18.6" fill="#d6d6d6" text-anchor="end" textLength="32.16" lengthAdjust="spacingAndGlyphs" >104</text>
<rect x="875.90" y="292.10" width="771.00" height="430.30" fill="none" stroke="#999999" stroke-width="1.9" />
<line x1="875.90" y1="723.40" x2="875.90" y2="731.00" stroke="#e2e2e2" stroke-width="1.5" />
<text x="875.30" y="751.50" font-size="18.6" fill="#d6d6d6" text-anchor="middle" textLength="10.72" lengthAdjust="spacingAndGlyphs" >0</text>
<line x1="953.00" y1="723.40" x2="953.00" y2="731.00" stroke="#e2e2e2" stroke-width="1.5" />
<text x="952.40" y="751.50" font-size="18.6" fill="#d6d6d6" text-anchor="middle" textLength="21.44" lengthAdjust="spacingAndGlyphs" >10</text>
<line x1="1030.10" y1="723.40" x2="1030.10" y2="731.00" stroke="#e2e2e2" stroke-width="1.5" />
<text x="1029.50" y="751.50" font-size="18.6" fill="#d6d6d6" text-anchor="middle" textLength="21.44" lengthAdjust="spacingAndGlyphs" >20</text>
<line x1="1107.20" y1="723.40" x2="1107.20" y2="731.00" stroke="#e2e2e2" stroke-width="1.5" />
<text x="1106.60" y="751.50" font-size="18.6" fill="#d6d6d6" text-anchor="middle" textLength="21.44" lengthAdjust="spacingAndGlyphs" >30</text>
<line x1="1184.30" y1="723.40" x2="1184.30" y2="731.00" stroke="#e2e2e2" stroke-width="1.5" />
<text x="1183.70" y="751.50" font-size="18.6" fill="#d6d6d6" text-anchor="middle" textLength="21.44" lengthAdjust="spacingAndGlyphs" >40</text>
<line x1="1261.40" y1="723.40" x2="1261.40" y2="731.00" stroke="#e2e2e2" stroke-width="1.5" />
<text x="1260.80" y="751.50" font-size="18.6" fill="#d6d6d6" text-anchor="middle" textLength="21.44" lengthAdjust="spacingAndGlyphs" >50</text>
<line x1="1338.50" y1="723.40" x2="1338.50" y2="731.00" stroke="#e2e2e2" stroke-width="1.5" />
<text x="1337.90" y="751.50" font-size="18.6" fill="#d6d6d6" text-anchor="middle" textLength="21.44" lengthAdjust="spacingAndGlyphs" >60</text>
<line x1="1415.60" y1="723.40" x2="1415.60" y2="731.00" stroke="#e2e2e2" stroke-width="1.5" />
<text x="1415.00" y="751.50" font-size="18.6" fill="#d6d6d6" text-anchor="middle" textLength="21.44" lengthAdjust="spacingAndGlyphs" >70</text>
<line x1="1492.70" y1="723.40" x2="1492.70" y2="731.00" stroke="#e2e2e2" stroke-width="1.5" />
<text x="1492.10" y="751.50" font-size="18.6" fill="#d6d6d6" text-anchor="middle" textLength="21.44" lengthAdjust="spacingAndGlyphs" >80</text>
<line x1="1569.80" y1="723.40" x2="1569.80" y2="731.00" stroke="#e2e2e2" stroke-width="1.5" />
<text x="1569.20" y="751.50" font-size="18.6" fill="#d6d6d6" text-anchor="middle" textLength="21.44" lengthAdjust="spacingAndGlyphs" >90</text>
<line x1="1646.90" y1="723.40" x2="1646.90" y2="731.00" stroke="#e2e2e2" stroke-width="1.5" />
<text x="1646.30" y="751.50" font-size="18.6" fill="#d6d6d6" text-anchor="middle" textLength="32.16" lengthAdjust="spacingAndGlyphs" >100</text>
<clipPath id="cq"><rect x="874.4" y="292.1" width="771.7000000000002" height="430.29999999999995"/></clipPath>
<polyline points="875.7,439.3 951.6,464.7 1028.7,490.9 1105.9,490.9 1183.4,494.1 1260.5,507.2 1337.7,498.1 1415.2,502.9 1491.9,492.9 1569.1,487.8 1647.4,492.9" fill="none" stroke="#008000" stroke-width="3.8" stroke-linejoin="round" clip-path="url(#cq)"/>
<polyline points="875.7,454.4 951.6,478.6 1028.7,500.5 1105.9,524.7 1183.4,517.6 1260.5,529.1 1337.7,531.5 1415.2,531.5 1491.9,525.5 1569.1,542.2 1647.4,541.4" fill="none" stroke="#ff0000" stroke-width="3.8" stroke-linejoin="round" clip-path="url(#cq)"/>
<polyline points="875.7,440.1 951.6,475.4 1028.7,499.3 1105.9,508.4 1150.0,513.2 1183.4,516.8 1260.5,519.6 1337.7,531.9 1415.2,531.9 1491.9,512.0 1569.1,511.6 1647.4,537.5" fill="none" stroke="#0000ff" stroke-width="3.8" stroke-linejoin="round" clip-path="url(#cq)"/>
<text x="1742.80" y="285.20" font-size="19.4" fill="#d6d6d6" textLength="111.50" lengthAdjust="spacingAndGlyphs" >RGB Balance</text>
<rect x="1733.05" y="291.90" width="171.95" height="437.90" fill="#222222" />
<line x1="1733.05" y1="687.90" x2="1905.00" y2="687.90" stroke="#999999" stroke-width="1.5" />
<line x1="1724.10" y1="687.90" x2="1730.80" y2="687.90" stroke="#e2e2e2" stroke-width="1.7" />
<text x="1723.50" y="695.65" font-size="18.6" fill="#d6d6d6" text-anchor="end" textLength="21.44" lengthAdjust="spacingAndGlyphs" >96</text>
<line x1="1733.05" y1="600.00" x2="1905.00" y2="600.00" stroke="#999999" stroke-width="1.5" />
<line x1="1724.10" y1="600.00" x2="1730.80" y2="600.00" stroke="#e2e2e2" stroke-width="1.7" />
<text x="1723.50" y="607.05" font-size="18.6" fill="#d6d6d6" text-anchor="end" textLength="21.44" lengthAdjust="spacingAndGlyphs" >98</text>
<line x1="1733.05" y1="513.00" x2="1905.00" y2="513.00" stroke="#999999" stroke-width="1.5" />
<line x1="1724.10" y1="513.00" x2="1730.80" y2="513.00" stroke="#e2e2e2" stroke-width="1.7" />
<text x="1723.50" y="520.95" font-size="18.6" fill="#d6d6d6" text-anchor="end" textLength="32.16" lengthAdjust="spacingAndGlyphs" >100</text>
<line x1="1733.05" y1="424.60" x2="1905.00" y2="424.60" stroke="#999999" stroke-width="1.5" />
<line x1="1724.10" y1="424.60" x2="1730.80" y2="424.60" stroke="#e2e2e2" stroke-width="1.7" />
<text x="1723.50" y="432.25" font-size="18.6" fill="#d6d6d6" text-anchor="end" textLength="32.16" lengthAdjust="spacingAndGlyphs" >102</text>
<line x1="1733.05" y1="337.90" x2="1905.00" y2="337.90" stroke="#999999" stroke-width="1.5" />
<line x1="1724.10" y1="337.90" x2="1730.80" y2="337.90" stroke="#e2e2e2" stroke-width="1.7" />
<text x="1723.50" y="345.95" font-size="18.6" fill="#d6d6d6" text-anchor="end" textLength="32.16" lengthAdjust="spacingAndGlyphs" >104</text>
<rect x="1748.00" y="545.70" width="46.40" height="184.10" fill="#000" />
<rect x="1750.10" y="547.90" width="43.10" height="183.40" fill="url(#gR)" />
<rect x="1794.40" y="498.40" width="45.60" height="231.40" fill="#000" />
<rect x="1796.20" y="500.40" width="42.80" height="230.90" fill="url(#gG)" />
<rect x="1840.00" y="543.70" width="46.20" height="186.10" fill="#000" />
<rect x="1842.00" y="545.90" width="43.10" height="185.40" fill="url(#gB)" />
<rect x="1733.05" y="291.90" width="171.95" height="437.90" fill="none" stroke="#999999" stroke-width="1.9" />
<line x1="1733.05" y1="730.80" x2="1733.05" y2="738.70" stroke="#e2e2e2" stroke-width="1.6" />
<line x1="1905.00" y1="730.80" x2="1905.00" y2="738.70" stroke="#e2e2e2" stroke-width="1.6" />
<text x="1819.00" y="752.00" font-size="18.6" fill="#d6d6d6" text-anchor="middle" textLength="32.16" lengthAdjust="spacingAndGlyphs" >100</text>
<text x="2162.90" y="285.40" font-size="19.4" fill="#d6d6d6" textLength="147.00" lengthAdjust="spacingAndGlyphs" >Gamma Log/Log</text>
<rect x="1985.00" y="293.00" width="537.10" height="429.10" fill="#222222" />
<line x1="1985.00" y1="638.80" x2="2522.10" y2="638.80" stroke="#999999" stroke-width="1.5" />
<line x1="1976.80" y1="638.80" x2="1984.20" y2="638.80" stroke="#e2e2e2" stroke-width="1.6" />
<line x1="1985.00" y1="551.90" x2="2522.10" y2="551.90" stroke="#999999" stroke-width="1.5" />
<line x1="1976.80" y1="551.90" x2="1984.20" y2="551.90" stroke="#e2e2e2" stroke-width="1.6" />
<line x1="1985.00" y1="465.10" x2="2522.10" y2="465.10" stroke="#999999" stroke-width="1.5" />
<line x1="1976.80" y1="465.10" x2="1984.20" y2="465.10" stroke="#e2e2e2" stroke-width="1.6" />
<line x1="1985.00" y1="380.90" x2="2522.10" y2="380.90" stroke="#999999" stroke-width="1.5" />
<line x1="1976.80" y1="380.90" x2="1984.20" y2="380.90" stroke="#e2e2e2" stroke-width="1.6" />
<line x1="1976.80" y1="293.80" x2="1985.00" y2="293.80" stroke="#e2e2e2" stroke-width="1.6" />
<line x1="1976.80" y1="722.10" x2="1985.00" y2="722.10" stroke="#e2e2e2" stroke-width="1.6" />
<text x="1976.30" y="732.75" font-size="18.6" fill="#d6d6d6" text-anchor="end" textLength="26.69" lengthAdjust="spacingAndGlyphs" >1.8</text>
<text x="1976.30" y="646.25" font-size="18.6" fill="#d6d6d6" text-anchor="end" textLength="10.72" lengthAdjust="spacingAndGlyphs" >2</text>
<text x="1976.30" y="559.65" font-size="18.6" fill="#d6d6d6" text-anchor="end" textLength="26.69" lengthAdjust="spacingAndGlyphs" >2.2</text>
<text x="1976.30" y="473.55" font-size="18.6" fill="#d6d6d6" text-anchor="end" textLength="26.69" lengthAdjust="spacingAndGlyphs" >2.4</text>
<text x="1976.30" y="387.15" font-size="18.6" fill="#d6d6d6" text-anchor="end" textLength="26.69" lengthAdjust="spacingAndGlyphs" >2.6</text>
<text x="1976.30" y="300.70" font-size="18.6" fill="#d6d6d6" text-anchor="end" textLength="26.69" lengthAdjust="spacingAndGlyphs" >2.8</text>
<rect x="1985.00" y="293.00" width="537.10" height="429.10" fill="none" stroke="#999999" stroke-width="1.9" />
<line x1="1984.20" y1="292.90" x2="2522.90" y2="292.90" stroke="#999999" stroke-width="3.6" />
<line x1="1985.00" y1="723.10" x2="1985.00" y2="731.00" stroke="#e2e2e2" stroke-width="1.5" />
<text x="1984.40" y="752.00" font-size="18.6" fill="#d6d6d6" text-anchor="middle" textLength="10.72" lengthAdjust="spacingAndGlyphs" >0</text>
<line x1="2092.42" y1="723.10" x2="2092.42" y2="731.00" stroke="#e2e2e2" stroke-width="1.5" />
<text x="2091.82" y="752.00" font-size="18.6" fill="#d6d6d6" text-anchor="middle" textLength="21.44" lengthAdjust="spacingAndGlyphs" >20</text>
<line x1="2199.84" y1="723.10" x2="2199.84" y2="731.00" stroke="#e2e2e2" stroke-width="1.5" />
<text x="2199.24" y="752.00" font-size="18.6" fill="#d6d6d6" text-anchor="middle" textLength="21.44" lengthAdjust="spacingAndGlyphs" >40</text>
<line x1="2307.26" y1="723.10" x2="2307.26" y2="731.00" stroke="#e2e2e2" stroke-width="1.5" />
<text x="2306.66" y="752.00" font-size="18.6" fill="#d6d6d6" text-anchor="middle" textLength="21.44" lengthAdjust="spacingAndGlyphs" >60</text>
<line x1="2414.68" y1="723.10" x2="2414.68" y2="731.00" stroke="#e2e2e2" stroke-width="1.5" />
<text x="2414.08" y="752.00" font-size="18.6" fill="#d6d6d6" text-anchor="middle" textLength="21.44" lengthAdjust="spacingAndGlyphs" >80</text>
<line x1="2522.10" y1="723.10" x2="2522.10" y2="731.00" stroke="#e2e2e2" stroke-width="1.5" />
<text x="2521.50" y="752.00" font-size="18.6" fill="#d6d6d6" text-anchor="middle" textLength="32.16" lengthAdjust="spacingAndGlyphs" >100</text>
<clipPath id="cg"><rect x="1985" y="293.0" width="536.4999999999999" height="429.1"/></clipPath>
<polyline points="2005.8,723.8 2009.8,703.2 2021.7,667.4 2031.7,647.5 2041.6,631.6 2059.5,608.9 2077.4,594.2 2097.2,581.1 2117.1,572.0 2137.0,564.0 2172.8,554.1 2198.6,547.3 2252.3,538.6 2305.9,532.2 2359.6,527.1 2413.3,523.1 2466.9,520.3 2521.8,515.5" fill="none" stroke="#ffff00" stroke-width="3.8" stroke-linejoin="round" clip-path="url(#cg)"/>
<polyline points="2024.9,723.8 2036.8,654.3 2091.3,591.1 2144.9,566.0 2198.6,550.1 2252.3,535.0 2305.9,531.8 2359.6,522.7 2413.3,529.8 2466.9,535.0 2521.8,517.1" fill="none" stroke="#828282" stroke-width="3.8" stroke-linejoin="round" clip-path="url(#cg)"/>
<text x="417.40" y="808.50" font-size="39.2" fill="#f0f0f0" textLength="292.70" lengthAdjust="spacingAndGlyphs" >Avg dE2000: 1.4</text>
<text x="974.30" y="808.50" font-size="39.2" fill="#f0f0f0" textLength="255.50" lengthAdjust="spacingAndGlyphs" >Avg CCT: 6523</text>
<text x="1493.60" y="808.50" font-size="39.2" fill="#f0f0f0" textLength="349.00" lengthAdjust="spacingAndGlyphs" >Contrast Ratio: 603</text>
<text x="2022.60" y="808.50" font-size="39.2" fill="#f0f0f0" textLength="426.00" lengthAdjust="spacingAndGlyphs" >Average Gamma: 2.181</text>
<rect x="301.00" y="835.10" width="2259.00" height="177.20" fill="#000000" />
<rect x="461.05" y="842.90" width="163.05" height="69.20" fill="#060808" />
<rect x="461.05" y="911.90" width="163.05" height="70.10" fill="#000000" />
<rect x="461.85" y="843.70" width="161.45" height="137.50" fill="none" stroke="#ffffff" stroke-width="1.6" />
<text x="542.55" y="1000.90" font-size="15.3" fill="#ffffff" text-anchor="middle" textLength="9.30" lengthAdjust="spacingAndGlyphs" >0</text>
<rect x="651.13" y="842.90" width="163.05" height="69.20" fill="#1b1d1c" />
<rect x="651.13" y="911.90" width="163.05" height="70.10" fill="#1a1a1a" />
<rect x="651.93" y="843.70" width="161.45" height="137.50" fill="none" stroke="#ffffff" stroke-width="1.6" />
<text x="732.63" y="1000.90" font-size="15.3" fill="#ffffff" text-anchor="middle" textLength="18.60" lengthAdjust="spacingAndGlyphs" >10</text>
<rect x="841.21" y="842.90" width="163.05" height="69.20" fill="#343434" />
<rect x="841.21" y="911.90" width="163.05" height="70.10" fill="#333333" />
<rect x="842.01" y="843.70" width="161.45" height="137.50" fill="none" stroke="#ffffff" stroke-width="1.6" />
<text x="922.71" y="1000.90" font-size="15.3" fill="#ffffff" text-anchor="middle" textLength="18.60" lengthAdjust="spacingAndGlyphs" >20</text>
<rect x="1031.29" y="842.90" width="163.05" height="69.20" fill="#4b4d4c" />
<rect x="1031.29" y="911.90" width="163.05" height="70.10" fill="#4d4d4d" />
<rect x="1032.09" y="843.70" width="161.45" height="137.50" fill="none" stroke="#ffffff" stroke-width="1.6" />
<text x="1112.79" y="1000.90" font-size="15.3" fill="#ffffff" text-anchor="middle" textLength="18.60" lengthAdjust="spacingAndGlyphs" >30</text>
<rect x="1221.37" y="842.90" width="163.05" height="69.20" fill="#646664" />
<rect x="1221.37" y="911.90" width="163.05" height="70.10" fill="#666666" />
<rect x="1222.17" y="843.70" width="161.45" height="137.50" fill="none" stroke="#ffffff" stroke-width="1.6" />
<text x="1302.87" y="1000.90" font-size="15.3" fill="#ffffff" text-anchor="middle" textLength="18.60" lengthAdjust="spacingAndGlyphs" >40</text>
<rect x="1411.45" y="842.90" width="163.05" height="69.20" fill="#808080" />
<rect x="1411.45" y="911.90" width="163.05" height="70.10" fill="#808080" />
<rect x="1412.25" y="843.70" width="161.45" height="137.50" fill="none" stroke="#ffffff" stroke-width="1.6" />
<text x="1492.95" y="1000.90" font-size="15.3" fill="#ffffff" text-anchor="middle" textLength="18.60" lengthAdjust="spacingAndGlyphs" >50</text>
<rect x="1601.53" y="842.90" width="163.05" height="69.20" fill="#979997" />
<rect x="1601.53" y="911.90" width="163.05" height="70.10" fill="#999999" />
<rect x="1602.33" y="843.70" width="161.45" height="137.50" fill="none" stroke="#ffffff" stroke-width="1.6" />
<text x="1683.03" y="1000.90" font-size="15.3" fill="#ffffff" text-anchor="middle" textLength="18.60" lengthAdjust="spacingAndGlyphs" >60</text>
<rect x="1791.61" y="842.90" width="163.05" height="69.20" fill="#b0b2ae" />
<rect x="1791.61" y="911.90" width="163.05" height="70.10" fill="#b3b3b3" />
<rect x="1792.41" y="843.70" width="161.45" height="137.50" fill="none" stroke="#ececec" stroke-width="1.6" />
<text x="1873.11" y="1000.90" font-size="15.3" fill="#ffffff" text-anchor="middle" textLength="18.60" lengthAdjust="spacingAndGlyphs" >70</text>
<rect x="1981.69" y="842.90" width="163.05" height="69.20" fill="#cbcdcb" />
<rect x="1981.69" y="911.90" width="163.05" height="70.10" fill="#cccccc" />
<rect x="1982.49" y="843.70" width="161.45" height="137.50" fill="none" stroke="#ececec" stroke-width="1.6" />
<text x="2063.19" y="1000.90" font-size="15.3" fill="#ffffff" text-anchor="middle" textLength="18.60" lengthAdjust="spacingAndGlyphs" >80</text>
<rect x="2171.77" y="842.90" width="163.05" height="69.20" fill="#e5e6e6" />
<rect x="2171.77" y="911.90" width="163.05" height="70.10" fill="#e6e6e6" />
<rect x="2172.57" y="843.70" width="161.45" height="137.50" fill="none" stroke="#ececec" stroke-width="1.6" />
<text x="2253.27" y="1000.90" font-size="15.3" fill="#ffffff" text-anchor="middle" textLength="18.60" lengthAdjust="spacingAndGlyphs" >90</text>
<rect x="2361.85" y="842.90" width="163.05" height="69.20" fill="#ffffff" />
<rect x="2361.85" y="911.90" width="163.05" height="70.10" fill="#ffffff" />
<rect x="2362.65" y="843.70" width="161.45" height="137.50" fill="none" stroke="#ececec" stroke-width="1.6" />
<text x="2443.35" y="1000.90" font-size="15.3" fill="#ffffff" text-anchor="middle" textLength="27.90" lengthAdjust="spacingAndGlyphs" >100</text>
<text transform="translate(448.5,897.1) rotate(-90)" font-size="16.6" fill="#fff" textLength="46.5" lengthAdjust="spacingAndGlyphs">Actual</text>
<text transform="translate(448.5,974.6) rotate(-90)" font-size="16.6" fill="#fff" textLength="46.5" lengthAdjust="spacingAndGlyphs">Target</text>
<text x="330.40" y="1102.75" font-size="39.6" fill="#f0f0f0" textLength="295.20" lengthAdjust="spacingAndGlyphs" >Current Reading</text>
<text x="329.80" y="1160.40" font-size="32.4" fill="#f0f0f0" textLength="138.50" lengthAdjust="spacingAndGlyphs" >x: 0.3124</text>
<text x="532.30" y="1160.40" font-size="32.4" fill="#f0f0f0" textLength="139.70" lengthAdjust="spacingAndGlyphs" >y: 0.3319</text>
<text x="330.90" y="1206.40" font-size="32.4" fill="#f0f0f0" textLength="149.50" lengthAdjust="spacingAndGlyphs" >u': 0.1966</text>
<text x="532.30" y="1206.40" font-size="32.4" fill="#f0f0f0" textLength="147.30" lengthAdjust="spacingAndGlyphs" >v': 0.4698</text>
<text x="330.00" y="1252.50" font-size="32.4" fill="#f0f0f0" textLength="252.90" lengthAdjust="spacingAndGlyphs" >cd/m²: 315.7211</text>
<text x="330.00" y="1298.30" font-size="32.4" fill="#f0f0f0" textLength="207.40" lengthAdjust="spacingAndGlyphs" >ΔE 2000: 2.45</text>
<text x="890.60" y="1056.80" font-size="19.4" fill="#d6d6d6" textLength="102.10" lengthAdjust="spacingAndGlyphs" >CIE 1931 xy</text>
<rect x="794.20" y="1063.00" width="342.10" height="5.00" fill="url(#ci0)" shape-rendering="crispEdges"/>
<rect x="794.20" y="1068.00" width="342.10" height="5.00" fill="url(#ci1)" shape-rendering="crispEdges"/>
<rect x="794.20" y="1073.00" width="342.10" height="5.00" fill="url(#ci2)" shape-rendering="crispEdges"/>
<rect x="794.20" y="1078.00" width="342.10" height="5.00" fill="url(#ci3)" shape-rendering="crispEdges"/>
<rect x="794.20" y="1083.00" width="342.10" height="5.00" fill="url(#ci4)" shape-rendering="crispEdges"/>
<rect x="794.20" y="1088.00" width="342.10" height="5.00" fill="url(#ci5)" shape-rendering="crispEdges"/>
<rect x="794.20" y="1093.00" width="342.10" height="5.00" fill="url(#ci6)" shape-rendering="crispEdges"/>
<rect x="794.20" y="1098.00" width="342.10" height="4.00" fill="url(#ci7)" shape-rendering="crispEdges"/>
<rect x="794.20" y="1102.00" width="342.10" height="5.00" fill="url(#ci8)" shape-rendering="crispEdges"/>
<rect x="794.20" y="1107.00" width="342.10" height="5.00" fill="url(#ci9)" shape-rendering="crispEdges"/>
<rect x="794.20" y="1112.00" width="342.10" height="5.00" fill="url(#ci10)" shape-rendering="crispEdges"/>
<rect x="794.20" y="1117.00" width="342.10" height="5.00" fill="url(#ci11)" shape-rendering="crispEdges"/>
<rect x="794.20" y="1122.00" width="342.10" height="5.00" fill="url(#ci12)" shape-rendering="crispEdges"/>
<rect x="794.20" y="1127.00" width="342.10" height="5.00" fill="url(#ci13)" shape-rendering="crispEdges"/>
<rect x="794.20" y="1132.00" width="342.10" height="5.00" fill="url(#ci14)" shape-rendering="crispEdges"/>
<rect x="794.20" y="1137.00" width="342.10" height="5.00" fill="url(#ci15)" shape-rendering="crispEdges"/>
<rect x="794.20" y="1142.00" width="342.10" height="5.00" fill="url(#ci16)" shape-rendering="crispEdges"/>
<rect x="794.20" y="1147.00" width="342.10" height="5.00" fill="url(#ci17)" shape-rendering="crispEdges"/>
<rect x="794.20" y="1152.00" width="342.10" height="4.00" fill="url(#ci18)" shape-rendering="crispEdges"/>
<rect x="794.20" y="1156.00" width="342.10" height="5.00" fill="url(#ci19)" shape-rendering="crispEdges"/>
<rect x="794.20" y="1161.00" width="342.10" height="5.00" fill="url(#ci20)" shape-rendering="crispEdges"/>
<rect x="794.20" y="1166.00" width="342.10" height="5.00" fill="url(#ci21)" shape-rendering="crispEdges"/>
<rect x="794.20" y="1171.00" width="342.10" height="5.00" fill="url(#ci22)" shape-rendering="crispEdges"/>
<rect x="794.20" y="1176.00" width="342.10" height="5.00" fill="url(#ci23)" shape-rendering="crispEdges"/>
<rect x="794.20" y="1181.00" width="342.10" height="5.00" fill="url(#ci24)" shape-rendering="crispEdges"/>
<rect x="794.20" y="1186.00" width="342.10" height="5.00" fill="url(#ci25)" shape-rendering="crispEdges"/>
<rect x="794.20" y="1191.00" width="342.10" height="5.00" fill="url(#ci26)" shape-rendering="crispEdges"/>
<rect x="794.20" y="1196.00" width="342.10" height="4.00" fill="url(#ci27)" shape-rendering="crispEdges"/>
<rect x="794.20" y="1200.00" width="342.10" height="5.00" fill="url(#ci28)" shape-rendering="crispEdges"/>
<rect x="794.20" y="1205.00" width="342.10" height="5.00" fill="url(#ci29)" shape-rendering="crispEdges"/>
<rect x="794.20" y="1210.00" width="342.10" height="5.00" fill="url(#ci30)" shape-rendering="crispEdges"/>
<rect x="794.20" y="1215.00" width="342.10" height="5.00" fill="url(#ci31)" shape-rendering="crispEdges"/>
<rect x="794.20" y="1220.00" width="342.10" height="5.00" fill="url(#ci32)" shape-rendering="crispEdges"/>
<rect x="794.20" y="1225.00" width="342.10" height="5.00" fill="url(#ci33)" shape-rendering="crispEdges"/>
<rect x="794.20" y="1230.00" width="342.10" height="5.00" fill="url(#ci34)" shape-rendering="crispEdges"/>
<rect x="794.20" y="1235.00" width="342.10" height="5.00" fill="url(#ci35)" shape-rendering="crispEdges"/>
<rect x="794.20" y="1240.00" width="342.10" height="5.00" fill="url(#ci36)" shape-rendering="crispEdges"/>
<rect x="794.20" y="1245.00" width="342.10" height="5.00" fill="url(#ci37)" shape-rendering="crispEdges"/>
<rect x="794.20" y="1250.00" width="342.10" height="4.00" fill="url(#ci38)" shape-rendering="crispEdges"/>
<rect x="794.20" y="1254.00" width="342.10" height="5.00" fill="url(#ci39)" shape-rendering="crispEdges"/>
<rect x="794.20" y="1259.00" width="342.10" height="5.00" fill="url(#ci40)" shape-rendering="crispEdges"/>
<rect x="794.20" y="1264.00" width="342.10" height="5.00" fill="url(#ci41)" shape-rendering="crispEdges"/>
<rect x="794.20" y="1269.00" width="342.10" height="5.00" fill="url(#ci42)" shape-rendering="crispEdges"/>
<rect x="794.20" y="1274.00" width="342.10" height="5.00" fill="url(#ci43)" shape-rendering="crispEdges"/>
<rect x="794.20" y="1279.00" width="342.10" height="5.00" fill="url(#ci44)" shape-rendering="crispEdges"/>
<rect x="794.20" y="1284.00" width="342.10" height="5.00" fill="url(#ci45)" shape-rendering="crispEdges"/>
<clipPath id="cc"><rect x="794.2" y="1063.3" width="342.0999999999999" height="225.4000000000001"/></clipPath>
<path d="M835,1290 Q975,1191.5 1136.5,1100" fill="none" stroke="#000" stroke-width="3.5" clip-path="url(#cc)"/>
<rect x="794.20" y="1063.30" width="342.10" height="225.40" fill="none" stroke="#9c9c9c" stroke-width="1.6" />
<line x1="786.90" y1="1128.60" x2="793.20" y2="1128.60" stroke="#e2e2e2" stroke-width="1.6" />
<text x="786.10" y="1135.60" font-size="18.6" fill="#d6d6d6" text-anchor="end" textLength="37.41" lengthAdjust="spacingAndGlyphs" >0.34</text>
<line x1="786.90" y1="1218.60" x2="793.20" y2="1218.60" stroke="#e2e2e2" stroke-width="1.6" />
<text x="786.10" y="1226.00" font-size="18.6" fill="#d6d6d6" text-anchor="end" textLength="37.41" lengthAdjust="spacingAndGlyphs" >0.32</text>
<line x1="809.70" y1="1289.50" x2="809.70" y2="1297.20" stroke="#e2e2e2" stroke-width="1.6" />
<text x="809.40" y="1318.00" font-size="18.6" fill="#d6d6d6" text-anchor="middle" textLength="37.41" lengthAdjust="spacingAndGlyphs" >0.29</text>
<line x1="877.90" y1="1289.50" x2="877.90" y2="1297.20" stroke="#e2e2e2" stroke-width="1.6" />
<text x="877.60" y="1318.00" font-size="18.6" fill="#d6d6d6" text-anchor="middle" textLength="26.69" lengthAdjust="spacingAndGlyphs" >0.3</text>
<line x1="945.80" y1="1289.50" x2="945.80" y2="1297.20" stroke="#e2e2e2" stroke-width="1.6" />
<text x="945.50" y="1318.00" font-size="18.6" fill="#d6d6d6" text-anchor="middle" textLength="37.41" lengthAdjust="spacingAndGlyphs" >0.31</text>
<line x1="1013.90" y1="1289.50" x2="1013.90" y2="1297.20" stroke="#e2e2e2" stroke-width="1.6" />
<text x="1013.60" y="1318.00" font-size="18.6" fill="#d6d6d6" text-anchor="middle" textLength="37.41" lengthAdjust="spacingAndGlyphs" >0.32</text>
<line x1="1082.10" y1="1289.50" x2="1082.10" y2="1297.20" stroke="#e2e2e2" stroke-width="1.6" />
<text x="1081.80" y="1318.00" font-size="18.6" fill="#d6d6d6" text-anchor="middle" textLength="37.41" lengthAdjust="spacingAndGlyphs" >0.33</text>
<ellipse cx="851.8" cy="1176.6" rx="5.9" ry="6.2" fill="#000"/>
<rect x="954.90" y="1166.00" width="19.20" height="18.00" fill="#ffffff" stroke="#000" stroke-width="2" />
<circle cx="951.5" cy="1163.4" r="5.4" fill="#404040" stroke="#000" stroke-width="1.4"/>
<circle cx="955.5" cy="1164" r="5.4" fill="#686868" stroke="#000" stroke-width="1.4"/>
<circle cx="964.2" cy="1166.2" r="5.4" fill="#a0a0a0" stroke="#000" stroke-width="1.4"/>
<circle cx="960.5" cy="1168.2" r="5.4" fill="#c4c4c4" stroke="#000" stroke-width="1.4"/>
<circle cx="957.4" cy="1167.4" r="5.4" fill="#e2e2e2" stroke="#000" stroke-width="1.4"/>
<circle cx="963" cy="1162.2" r="5.4" fill="#ffffff" stroke="#000" stroke-width="1.4"/>
<rect x="1150.80" y="1026.30" width="1143.40" height="15.60" fill="#2d2d2d" />
<rect x="1150.80" y="1041.80" width="1143.40" height="17.20" fill="url(#gHdr)" />
<text x="1360.00" y="1049.00" font-size="17.6" fill="#f0f0f0" text-anchor="middle" textLength="9.75" lengthAdjust="spacingAndGlyphs" >0</text>
<text x="1449.00" y="1049.00" font-size="17.6" fill="#f0f0f0" text-anchor="middle" textLength="19.50" lengthAdjust="spacingAndGlyphs" >10</text>
<text x="1538.00" y="1049.00" font-size="17.6" fill="#f0f0f0" text-anchor="middle" textLength="19.50" lengthAdjust="spacingAndGlyphs" >20</text>
<text x="1627.00" y="1049.00" font-size="17.6" fill="#f0f0f0" text-anchor="middle" textLength="19.50" lengthAdjust="spacingAndGlyphs" >30</text>
<text x="1716.00" y="1049.00" font-size="17.6" fill="#f0f0f0" text-anchor="middle" textLength="19.50" lengthAdjust="spacingAndGlyphs" >40</text>
<text x="1805.00" y="1049.00" font-size="17.6" fill="#f0f0f0" text-anchor="middle" textLength="19.50" lengthAdjust="spacingAndGlyphs" >50</text>
<text x="1894.00" y="1049.00" font-size="17.6" fill="#f0f0f0" text-anchor="middle" textLength="19.50" lengthAdjust="spacingAndGlyphs" >60</text>
<text x="1983.00" y="1049.00" font-size="17.6" fill="#f0f0f0" text-anchor="middle" textLength="19.50" lengthAdjust="spacingAndGlyphs" >70</text>
<text x="2072.00" y="1049.00" font-size="17.6" fill="#f0f0f0" text-anchor="middle" textLength="19.50" lengthAdjust="spacingAndGlyphs" >80</text>
<text x="2161.00" y="1049.00" font-size="17.6" fill="#f0f0f0" text-anchor="middle" textLength="19.50" lengthAdjust="spacingAndGlyphs" >90</text>
<text x="2250.00" y="1049.00" font-size="17.6" fill="#f0f0f0" text-anchor="middle" textLength="29.25" lengthAdjust="spacingAndGlyphs" >100</text>
<rect x="1150.80" y="1058.90" width="1143.40" height="31.80" fill="#414141" />
<text x="1163.60" y="1082.00" font-size="18.2" fill="#f2f2f2" font-weight="bold" textLength="64.70" lengthAdjust="spacingAndGlyphs" >x: CIE31</text>
<text x="1319.90" y="1082.10" font-size="17.9" fill="#f2f2f2" textLength="50.70" lengthAdjust="spacingAndGlyphs" >0.2963</text>
<text x="1408.90" y="1082.10" font-size="17.9" fill="#f2f2f2" textLength="50.70" lengthAdjust="spacingAndGlyphs" >0.3117</text>
<text x="1497.90" y="1082.10" font-size="17.9" fill="#f2f2f2" textLength="50.70" lengthAdjust="spacingAndGlyphs" >0.3124</text>
<text x="1586.90" y="1082.10" font-size="17.9" fill="#f2f2f2" textLength="50.70" lengthAdjust="spacingAndGlyphs" >0.3109</text>
<text x="1675.90" y="1082.10" font-size="17.9" fill="#f2f2f2" textLength="50.70" lengthAdjust="spacingAndGlyphs" >0.3126</text>
<text x="1764.90" y="1082.10" font-size="17.9" fill="#f2f2f2" textLength="50.70" lengthAdjust="spacingAndGlyphs" >0.3120</text>
<text x="1853.90" y="1082.10" font-size="17.9" fill="#f2f2f2" textLength="50.70" lengthAdjust="spacingAndGlyphs" >0.3126</text>
<text x="1942.90" y="1082.10" font-size="17.9" fill="#f2f2f2" textLength="50.70" lengthAdjust="spacingAndGlyphs" >0.3126</text>
<text x="2031.90" y="1082.10" font-size="17.9" fill="#f2f2f2" textLength="50.70" lengthAdjust="spacingAndGlyphs" >0.3120</text>
<text x="2120.90" y="1082.10" font-size="17.9" fill="#f2f2f2" textLength="50.70" lengthAdjust="spacingAndGlyphs" >0.3113</text>
<text x="2209.90" y="1082.10" font-size="17.9" fill="#f2f2f2" textLength="50.70" lengthAdjust="spacingAndGlyphs" >0.3124</text>
<rect x="1150.80" y="1090.40" width="1143.40" height="31.80" fill="#828282" />
<text x="1163.60" y="1113.50" font-size="18.2" fill="#f2f2f2" font-weight="bold" textLength="64.70" lengthAdjust="spacingAndGlyphs" >y: CIE31</text>
<text x="1319.90" y="1113.60" font-size="17.9" fill="#f2f2f2" textLength="50.70" lengthAdjust="spacingAndGlyphs" >0.3289</text>
<text x="1408.90" y="1113.60" font-size="17.9" fill="#f2f2f2" textLength="50.70" lengthAdjust="spacingAndGlyphs" >0.3316</text>
<text x="1497.90" y="1113.60" font-size="17.9" fill="#f2f2f2" textLength="50.70" lengthAdjust="spacingAndGlyphs" >0.3306</text>
<text x="1586.90" y="1113.60" font-size="17.9" fill="#f2f2f2" textLength="50.70" lengthAdjust="spacingAndGlyphs" >0.3316</text>
<text x="1675.90" y="1113.60" font-size="17.9" fill="#f2f2f2" textLength="50.70" lengthAdjust="spacingAndGlyphs" >0.3317</text>
<text x="1764.90" y="1113.60" font-size="17.9" fill="#f2f2f2" textLength="50.70" lengthAdjust="spacingAndGlyphs" >0.3303</text>
<text x="1853.90" y="1113.60" font-size="17.9" fill="#f2f2f2" textLength="50.70" lengthAdjust="spacingAndGlyphs" >0.3322</text>
<text x="1942.90" y="1113.60" font-size="17.9" fill="#f2f2f2" textLength="50.70" lengthAdjust="spacingAndGlyphs" >0.3314</text>
<text x="2031.90" y="1113.60" font-size="17.9" fill="#f2f2f2" textLength="50.70" lengthAdjust="spacingAndGlyphs" >0.3304</text>
<text x="2120.90" y="1113.60" font-size="17.9" fill="#f2f2f2" textLength="50.70" lengthAdjust="spacingAndGlyphs" >0.3306</text>
<text x="2209.90" y="1113.60" font-size="17.9" fill="#f2f2f2" textLength="50.70" lengthAdjust="spacingAndGlyphs" >0.3319</text>
<rect x="1150.80" y="1121.90" width="1143.40" height="31.80" fill="#414141" />
<text x="1163.60" y="1145.00" font-size="18.2" fill="#f2f2f2" font-weight="bold" textLength="11.00" lengthAdjust="spacingAndGlyphs" >Y</text>
<text x="1319.90" y="1145.10" font-size="17.9" fill="#f2f2f2" textLength="50.70" lengthAdjust="spacingAndGlyphs" >0.5238</text>
<text x="1408.90" y="1145.10" font-size="17.9" fill="#f2f2f2" textLength="50.70" lengthAdjust="spacingAndGlyphs" >3.6156</text>
<text x="1497.90" y="1145.10" font-size="17.9" fill="#f2f2f2" textLength="60.36" lengthAdjust="spacingAndGlyphs" >10.7065</text>
<text x="1586.90" y="1145.10" font-size="17.9" fill="#f2f2f2" textLength="60.36" lengthAdjust="spacingAndGlyphs" >23.0576</text>
<text x="1675.90" y="1145.10" font-size="17.9" fill="#f2f2f2" textLength="60.36" lengthAdjust="spacingAndGlyphs" >42.2299</text>
<text x="1764.90" y="1145.10" font-size="17.9" fill="#f2f2f2" textLength="60.36" lengthAdjust="spacingAndGlyphs" >67.7379</text>
<text x="1853.90" y="1145.10" font-size="17.9" fill="#f2f2f2" textLength="70.02" lengthAdjust="spacingAndGlyphs" >100.4918</text>
<text x="1942.90" y="1145.10" font-size="17.9" fill="#f2f2f2" textLength="70.02" lengthAdjust="spacingAndGlyphs" >140.0522</text>
<text x="2031.90" y="1145.10" font-size="17.9" fill="#f2f2f2" textLength="70.02" lengthAdjust="spacingAndGlyphs" >191.3111</text>
<text x="2120.90" y="1145.10" font-size="17.9" fill="#f2f2f2" textLength="70.02" lengthAdjust="spacingAndGlyphs" >250.7344</text>
<text x="2209.90" y="1145.10" font-size="17.9" fill="#f2f2f2" textLength="70.02" lengthAdjust="spacingAndGlyphs" >315.7211</text>
<rect x="1150.80" y="1153.40" width="1143.40" height="31.80" fill="#828282" />
<text x="1163.60" y="1176.50" font-size="18.2" fill="#f2f2f2" font-weight="bold" textLength="68.00" lengthAdjust="spacingAndGlyphs" >Target Y</text>
<text x="1319.90" y="1176.60" font-size="17.9" fill="#f2f2f2" textLength="50.70" lengthAdjust="spacingAndGlyphs" >0.0000</text>
<text x="1408.90" y="1176.60" font-size="17.9" fill="#f2f2f2" textLength="50.70" lengthAdjust="spacingAndGlyphs" >3.2613</text>
<text x="1497.90" y="1176.60" font-size="17.9" fill="#f2f2f2" textLength="60.36" lengthAdjust="spacingAndGlyphs" >10.4519</text>
<text x="1586.90" y="1176.60" font-size="17.9" fill="#f2f2f2" textLength="60.36" lengthAdjust="spacingAndGlyphs" >22.8177</text>
<text x="1675.90" y="1176.60" font-size="17.9" fill="#f2f2f2" textLength="60.36" lengthAdjust="spacingAndGlyphs" >41.9493</text>
<text x="1764.90" y="1176.60" font-size="17.9" fill="#f2f2f2" textLength="60.36" lengthAdjust="spacingAndGlyphs" >68.1517</text>
<text x="1853.90" y="1176.60" font-size="17.9" fill="#f2f2f2" textLength="70.02" lengthAdjust="spacingAndGlyphs" >100.5719</text>
<text x="1942.90" y="1176.60" font-size="17.9" fill="#f2f2f2" textLength="70.02" lengthAdjust="spacingAndGlyphs" >140.5594</text>
<text x="2031.90" y="1176.60" font-size="17.9" fill="#f2f2f2" textLength="70.02" lengthAdjust="spacingAndGlyphs" >190.6410</text>
<text x="2120.90" y="1176.60" font-size="17.9" fill="#f2f2f2" textLength="70.02" lengthAdjust="spacingAndGlyphs" >249.8294</text>
<text x="2209.90" y="1176.60" font-size="17.9" fill="#f2f2f2" textLength="70.02" lengthAdjust="spacingAndGlyphs" >315.7211</text>
<rect x="1150.80" y="1184.90" width="1143.40" height="31.80" fill="#414141" />
<text x="1163.60" y="1208.00" font-size="18.2" fill="#f2f2f2" font-weight="bold" textLength="138.00" lengthAdjust="spacingAndGlyphs" >Gamma Log/Log</text>
<text x="1319.90" y="1208.10" font-size="17.9" fill="#f2f2f2" textLength="50.70" lengthAdjust="spacingAndGlyphs" >1.2778</text>
<text x="1408.90" y="1208.10" font-size="17.9" fill="#f2f2f2" textLength="50.70" lengthAdjust="spacingAndGlyphs" >1.9576</text>
<text x="1497.90" y="1208.10" font-size="17.9" fill="#f2f2f2" textLength="50.70" lengthAdjust="spacingAndGlyphs" >2.1026</text>
<text x="1586.90" y="1208.10" font-size="17.9" fill="#f2f2f2" textLength="50.70" lengthAdjust="spacingAndGlyphs" >2.1617</text>
<text x="1675.90" y="1208.10" font-size="17.9" fill="#f2f2f2" textLength="50.70" lengthAdjust="spacingAndGlyphs" >2.1955</text>
<text x="1764.90" y="1208.10" font-size="17.9" fill="#f2f2f2" textLength="50.70" lengthAdjust="spacingAndGlyphs" >2.2332</text>
<text x="1853.90" y="1208.10" font-size="17.9" fill="#f2f2f2" textLength="50.70" lengthAdjust="spacingAndGlyphs" >2.2410</text>
<text x="1942.90" y="1208.10" font-size="17.9" fill="#f2f2f2" textLength="50.70" lengthAdjust="spacingAndGlyphs" >2.2612</text>
<text x="2031.90" y="1208.10" font-size="17.9" fill="#f2f2f2" textLength="50.70" lengthAdjust="spacingAndGlyphs" >2.2450</text>
<text x="2120.90" y="1208.10" font-size="17.9" fill="#f2f2f2" textLength="50.70" lengthAdjust="spacingAndGlyphs" >2.2335</text>
<text x="2209.90" y="1208.10" font-size="17.9" fill="#f2f2f2" textLength="50.70" lengthAdjust="spacingAndGlyphs" >2.2749</text>
<rect x="1150.80" y="1216.40" width="1143.40" height="31.80" fill="#828282" />
<text x="1163.60" y="1239.50" font-size="18.2" fill="#f2f2f2" font-weight="bold" textLength="31.50" lengthAdjust="spacingAndGlyphs" >CCT</text>
<text x="1319.90" y="1239.60" font-size="17.9" fill="#f2f2f2" textLength="79.68" lengthAdjust="spacingAndGlyphs" >7454.0000</text>
<text x="1408.90" y="1239.60" font-size="17.9" fill="#f2f2f2" textLength="79.68" lengthAdjust="spacingAndGlyphs" >6542.0000</text>
<text x="1497.90" y="1239.60" font-size="17.9" fill="#f2f2f2" textLength="79.68" lengthAdjust="spacingAndGlyphs" >6508.0000</text>
<text x="1586.90" y="1239.60" font-size="17.9" fill="#f2f2f2" textLength="79.68" lengthAdjust="spacingAndGlyphs" >6581.0000</text>
<text x="1675.90" y="1239.60" font-size="17.9" fill="#f2f2f2" textLength="79.68" lengthAdjust="spacingAndGlyphs" >6492.0000</text>
<text x="1764.90" y="1239.60" font-size="17.9" fill="#f2f2f2" textLength="79.68" lengthAdjust="spacingAndGlyphs" >6533.0000</text>
<text x="1853.90" y="1239.60" font-size="17.9" fill="#f2f2f2" textLength="79.68" lengthAdjust="spacingAndGlyphs" >6485.0000</text>
<text x="1942.90" y="1239.60" font-size="17.9" fill="#f2f2f2" textLength="79.68" lengthAdjust="spacingAndGlyphs" >6490.0000</text>
<text x="2031.90" y="1239.60" font-size="17.9" fill="#f2f2f2" textLength="79.68" lengthAdjust="spacingAndGlyphs" >6534.0000</text>
<text x="2120.90" y="1239.60" font-size="17.9" fill="#f2f2f2" textLength="79.68" lengthAdjust="spacingAndGlyphs" >6570.0000</text>
<text x="2209.90" y="1239.60" font-size="17.9" fill="#f2f2f2" textLength="79.68" lengthAdjust="spacingAndGlyphs" >6497.0000</text>
<rect x="1150.80" y="1247.90" width="1143.40" height="31.80" fill="#414141" />
<text x="1163.60" y="1271.00" font-size="18.2" fill="#f2f2f2" font-weight="bold" textLength="67.50" lengthAdjust="spacingAndGlyphs" >ΔE 2000</text>
<text x="1319.90" y="1271.10" font-size="17.9" fill="#f2f2f2" textLength="50.70" lengthAdjust="spacingAndGlyphs" >1.0045</text>
<text x="1408.90" y="1271.10" font-size="17.9" fill="#f2f2f2" textLength="50.70" lengthAdjust="spacingAndGlyphs" >0.8483</text>
<text x="1497.90" y="1271.10" font-size="17.9" fill="#f2f2f2" textLength="50.70" lengthAdjust="spacingAndGlyphs" >0.5438</text>
<text x="1586.90" y="1271.10" font-size="17.9" fill="#f2f2f2" textLength="50.70" lengthAdjust="spacingAndGlyphs" >1.3984</text>
<text x="1675.90" y="1271.10" font-size="17.9" fill="#f2f2f2" textLength="50.70" lengthAdjust="spacingAndGlyphs" >1.1979</text>
<text x="1764.90" y="1271.10" font-size="17.9" fill="#f2f2f2" textLength="50.70" lengthAdjust="spacingAndGlyphs" >0.9549</text>
<text x="1853.90" y="1271.10" font-size="17.9" fill="#f2f2f2" textLength="50.70" lengthAdjust="spacingAndGlyphs" >1.8107</text>
<text x="1942.90" y="1271.10" font-size="17.9" fill="#f2f2f2" textLength="50.70" lengthAdjust="spacingAndGlyphs" >1.5379</text>
<text x="2031.90" y="1271.10" font-size="17.9" fill="#f2f2f2" textLength="50.70" lengthAdjust="spacingAndGlyphs" >1.3869</text>
<text x="2120.90" y="1271.10" font-size="17.9" fill="#f2f2f2" textLength="50.70" lengthAdjust="spacingAndGlyphs" >2.1195</text>
<text x="2209.90" y="1271.10" font-size="17.9" fill="#f2f2f2" textLength="50.70" lengthAdjust="spacingAndGlyphs" >2.4485</text>
<rect x="1150.80" y="1279.40" width="1143.40" height="31.80" fill="#828282" />
<text x="1163.60" y="1302.50" font-size="18.2" fill="#f2f2f2" font-weight="bold" textLength="54.00" lengthAdjust="spacingAndGlyphs" >ΔE ITP</text>
<text x="1319.90" y="1302.60" font-size="17.9" fill="#f2f2f2" textLength="60.36" lengthAdjust="spacingAndGlyphs" >86.0291</text>
<text x="1408.90" y="1302.60" font-size="17.9" fill="#f2f2f2" textLength="50.70" lengthAdjust="spacingAndGlyphs" >4.9719</text>
<text x="1497.90" y="1302.60" font-size="17.9" fill="#f2f2f2" textLength="50.70" lengthAdjust="spacingAndGlyphs" >1.4977</text>
<text x="1586.90" y="1302.60" font-size="17.9" fill="#f2f2f2" textLength="50.70" lengthAdjust="spacingAndGlyphs" >1.8571</text>
<text x="1675.90" y="1302.60" font-size="17.9" fill="#f2f2f2" textLength="50.70" lengthAdjust="spacingAndGlyphs" >1.2417</text>
<text x="1764.90" y="1302.60" font-size="17.9" fill="#f2f2f2" textLength="50.70" lengthAdjust="spacingAndGlyphs" >1.0153</text>
<text x="1853.90" y="1302.60" font-size="17.9" fill="#f2f2f2" textLength="50.70" lengthAdjust="spacingAndGlyphs" >1.4690</text>
<text x="1942.90" y="1302.60" font-size="17.9" fill="#f2f2f2" textLength="50.70" lengthAdjust="spacingAndGlyphs" >1.1744</text>
<text x="2031.90" y="1302.60" font-size="17.9" fill="#f2f2f2" textLength="50.70" lengthAdjust="spacingAndGlyphs" >1.0266</text>
<text x="2120.90" y="1302.60" font-size="17.9" fill="#f2f2f2" textLength="50.70" lengthAdjust="spacingAndGlyphs" >1.5431</text>
<text x="2209.90" y="1302.60" font-size="17.9" fill="#f2f2f2" textLength="50.70" lengthAdjust="spacingAndGlyphs" >1.4621</text>
<rect x="2294.20" y="1026.30" width="1.80" height="284.80" fill="#101010" />
<rect x="1149.8" y="1024.9" width="1398.4" height="310.9" fill="none" stroke="#f0f0f0" stroke-width="1.8" stroke-dasharray="2 2"/>
<rect x="300.30" y="1433.60" width="2259.70" height="94.40" fill="url(#gBarBg)" />
<rect x="301.60" y="1434.90" width="158.20" height="91.70" fill="url(#gBB)" rx="5" />
<rect x="308.90" y="1442.20" width="143.60" height="54.20" fill="#000000" rx="4.6" />
<text x="380.70" y="1519.80" font-size="14.8" fill="#2a2a2a" text-anchor="middle" font-weight="bold" textLength="9.00" lengthAdjust="spacingAndGlyphs" >0</text>
<rect x="462.73" y="1434.90" width="158.20" height="91.70" fill="url(#gBB)" rx="5" />
<rect x="470.03" y="1442.20" width="143.60" height="54.20" fill="url(#sw1)" rx="4.6" />
<text x="541.83" y="1519.80" font-size="14.8" fill="#2a2a2a" text-anchor="middle" font-weight="bold" textLength="18.00" lengthAdjust="spacingAndGlyphs" >10</text>
<rect x="623.86" y="1434.90" width="158.20" height="91.70" fill="url(#gBB)" rx="5" />
<rect x="631.16" y="1442.20" width="143.60" height="54.20" fill="url(#sw2)" rx="4.6" />
<text x="702.96" y="1519.80" font-size="14.8" fill="#2a2a2a" text-anchor="middle" font-weight="bold" textLength="18.00" lengthAdjust="spacingAndGlyphs" >20</text>
<rect x="784.99" y="1434.90" width="158.20" height="91.70" fill="url(#gBB)" rx="5" />
<rect x="792.29" y="1442.20" width="143.60" height="54.20" fill="url(#sw3)" rx="4.6" />
<text x="864.09" y="1519.80" font-size="14.8" fill="#2a2a2a" text-anchor="middle" font-weight="bold" textLength="18.00" lengthAdjust="spacingAndGlyphs" >30</text>
<rect x="946.12" y="1434.90" width="158.20" height="91.70" fill="url(#gBB)" rx="5" />
<rect x="953.42" y="1442.20" width="143.60" height="54.20" fill="url(#sw4)" rx="4.6" />
<text x="1025.22" y="1519.80" font-size="14.8" fill="#2a2a2a" text-anchor="middle" font-weight="bold" textLength="18.00" lengthAdjust="spacingAndGlyphs" >40</text>
<rect x="1107.25" y="1434.90" width="158.20" height="91.70" fill="url(#gBB)" rx="5" />
<rect x="1114.55" y="1442.20" width="143.60" height="54.20" fill="url(#sw5)" rx="4.6" />
<text x="1186.35" y="1519.80" font-size="14.8" fill="#2a2a2a" text-anchor="middle" font-weight="bold" textLength="18.00" lengthAdjust="spacingAndGlyphs" >50</text>
<rect x="1268.38" y="1434.90" width="158.20" height="91.70" fill="url(#gBB)" rx="5" />
<rect x="1275.68" y="1442.20" width="143.60" height="54.20" fill="url(#sw6)" rx="4.6" />
<text x="1347.48" y="1519.80" font-size="14.8" fill="#2a2a2a" text-anchor="middle" font-weight="bold" textLength="18.00" lengthAdjust="spacingAndGlyphs" >60</text>
<rect x="1429.51" y="1434.90" width="158.20" height="91.70" fill="url(#gBB)" rx="5" />
<rect x="1436.81" y="1442.20" width="143.60" height="54.20" fill="url(#sw7)" rx="4.6" />
<text x="1508.61" y="1519.80" font-size="14.8" fill="#2a2a2a" text-anchor="middle" font-weight="bold" textLength="18.00" lengthAdjust="spacingAndGlyphs" >70</text>
<rect x="1590.64" y="1434.90" width="158.20" height="91.70" fill="url(#gBB)" rx="5" />
<rect x="1597.94" y="1442.20" width="143.60" height="54.20" fill="url(#sw8)" rx="4.6" />
<text x="1669.74" y="1519.80" font-size="14.8" fill="#2a2a2a" text-anchor="middle" font-weight="bold" textLength="18.00" lengthAdjust="spacingAndGlyphs" >80</text>
<rect x="1751.77" y="1434.90" width="158.20" height="91.70" fill="url(#gBB)" rx="5" />
<rect x="1759.07" y="1442.20" width="143.60" height="54.20" fill="url(#sw9)" rx="4.6" />
<text x="1830.87" y="1519.80" font-size="14.8" fill="#2a2a2a" text-anchor="middle" font-weight="bold" textLength="18.00" lengthAdjust="spacingAndGlyphs" >90</text>
<rect x="1912.90" y="1434.90" width="158.20" height="91.70" fill="url(#gBBs)" rx="5" />
<rect x="1920.20" y="1442.20" width="143.60" height="54.20" fill="url(#sw10)" rx="4.6" />
<text x="1992.00" y="1519.80" font-size="14.8" fill="#ffffff" text-anchor="middle" font-weight="bold" textLength="27.00" lengthAdjust="spacingAndGlyphs" >100</text>
<path d="M2075.7,1462.1 V1440 Q2075.7,1434.9 2080.8,1434.9 H2142.5 Q2147.6,1434.9 2147.6,1440 V1462.1 Z" fill="url(#gBB2)"/>
<circle cx="2111.4" cy="1449.3" r="11.3" fill="url(#gUpC)"/>
<path d="M2105,1451 H2118 L2111.5,1444.8 Z" fill="#333"/>
<path d="M2075.7,1463.6 H2147.6 V1521.5 Q2147.6,1526.4 2142.6,1526.4 H2080.7 Q2075.7,1526.4 2075.7,1521.5 Z" fill="url(#gBB3)"/>
<rect x="2090.00" y="1472.80" width="43.30" height="43.40" fill="url(#gStop)" rx="6" stroke="#202020" stroke-width="3.6" />
<rect x="2101.30" y="1485.10" width="20.60" height="19.90" fill="url(#gStopB)" />
<rect x="2149.40" y="1434.90" width="68.50" height="45.00" fill="url(#gBB4)" rx="3.5" />
<circle cx="2184.7" cy="1456.4" r="13" fill="#7c7c7c" opacity="0.75"/>
<rect x="2218.90" y="1434.90" width="66.70" height="45.00" fill="url(#gBB4)" rx="3.5" />
<circle cx="2253.2" cy="1456.4" r="13" fill="#7c7c7c" opacity="0.75"/>
<rect x="2286.60" y="1434.90" width="66.40" height="45.00" fill="url(#gBB4)" rx="3.5" />
<circle cx="2320.8" cy="1456.4" r="13" fill="#7c7c7c" opacity="0.75"/>
<rect x="2354.00" y="1434.90" width="66.30" height="45.00" fill="url(#gBB4)" rx="3.5" />
<circle cx="2388.2" cy="1456.4" r="13" fill="#7c7c7c" opacity="0.75"/>
<rect x="2421.30" y="1434.90" width="66.30" height="45.00" fill="url(#gBB4)" rx="3.5" />
<circle cx="2455.4" cy="1456.4" r="13" fill="#7c7c7c" opacity="0.75"/>
<rect x="2488.60" y="1434.90" width="72.40" height="45.00" fill="url(#gBB4)" rx="3.5" />
<circle cx="2525.8" cy="1456.4" r="13" fill="#7c7c7c" opacity="0.75"/>
<rect x="2149.40" y="1481.00" width="203.30" height="45.20" fill="url(#gBB5)" rx="4" />
<rect x="2353.90" y="1481.00" width="208.00" height="45.20" fill="url(#gBB5)" rx="4" />
<circle cx="2195" cy="1504.5" r="14.5" fill="#949494" opacity="0.8"/>
<circle cx="2515.3" cy="1504.4" r="15" fill="#949494" opacity="0.8"/>
<text x="2236.00" y="1516.00" font-size="33.4" fill="#2c2c2c" textLength="75.50" lengthAdjust="spacingAndGlyphs" >Back</text>
<text x="2395.70" y="1515.60" font-size="33.4" fill="#2c2c2c" textLength="77.40" lengthAdjust="spacingAndGlyphs" >Next</text>
<text x="2515.50" y="1512.50" font-size="25" fill="#3a3a3a" text-anchor="middle" >»</text>
<path d="M2248,1449.5 V1463.5 L2260,1456.5 Z" fill="#333" opacity="0.8"/>
<g fill="none" stroke="#303030" stroke-width="2.2" opacity="0.75"><path d="M2315.5,1450.5 H2312 V1464 H2328.5 V1450.5 H2325"/><path d="M2316,1459.5 H2324.5" stroke-dasharray="1.8 1.6"/><circle cx="2382.3" cy="1457.5" r="4.6"/><circle cx="2392.7" cy="1457.5" r="4.6"/><path d="M2461,1458 A6.6,6.6 0 1 1 2456.5,1451.8"/><path d="M2455,1448 L2461,1451.5 L2455.5,1455.5 Z" fill="#303030" stroke="none"/></g>
<g opacity="0.9" fill="none" stroke-linejoin="round"><path d="M2173.4,1445.6 L2226.2,1456.4 L2228.3,1486.7 L2188,1490.3 M2173.4,1445.6 L2176.2,1495 L2208.4,1509.7 L2263,1493 L2231.4,1487.4" stroke="#e6e6e6" stroke-width="7.2" stroke-opacity="0.55"/><path d="M2173.4,1445.6 L2226.2,1456.4 L2228.3,1486.7 L2188,1490.3 M2173.4,1445.6 L2176.2,1495 L2208.4,1509.7 L2263,1493 L2231.4,1487.4" stroke="#9c3440" stroke-width="4.6" stroke-opacity="0.85"/><rect x="2181.3" y="1453.7" width="7.8" height="7.9" fill="#262626" stroke="none"/><path d="M2189.6,1463.7 Q2198,1466 2205.3,1482.5 Q2215,1460 2232.5,1444.3" stroke="#e6e6e6" stroke-width="7.5" stroke-opacity="0.5"/><path d="M2189.6,1463.7 Q2198,1466 2205.3,1482.5 Q2215,1460 2232.5,1444.3" stroke="#454545" stroke-width="5"/></g>
<text x="2233.6" y="1484" font-size="35.6" font-weight="bold" fill="#9c3440" fill-opacity="0.8" stroke="#e8e8e8" stroke-opacity="0.75" stroke-width="1.4" paint-order="stroke" textLength="197" lengthAdjust="spacingAndGlyphs">NOTEBOOK</text>
<text x="2432.4" y="1484" font-size="35.6" fill="none" stroke="#e8e8e8" stroke-opacity="0.75" stroke-width="3.4" textLength="117" lengthAdjust="spacingAndGlyphs">CHECK</text>
<text x="2432.4" y="1484" font-size="35.6" fill="#444" stroke="#444" stroke-width="1.0" fill-opacity="0.92" stroke-opacity="0.92" textLength="117" lengthAdjust="spacingAndGlyphs">CHECK</text>
<text x="2195.00" y="1512.50" font-size="25" fill="#3a3a3a" text-anchor="middle" opacity="0.7">«</text>
<rect x="2554.40" y="88.00" width="5.60" height="1440.00" fill="url(#gEdge)" />
</svg>
</body></html>
